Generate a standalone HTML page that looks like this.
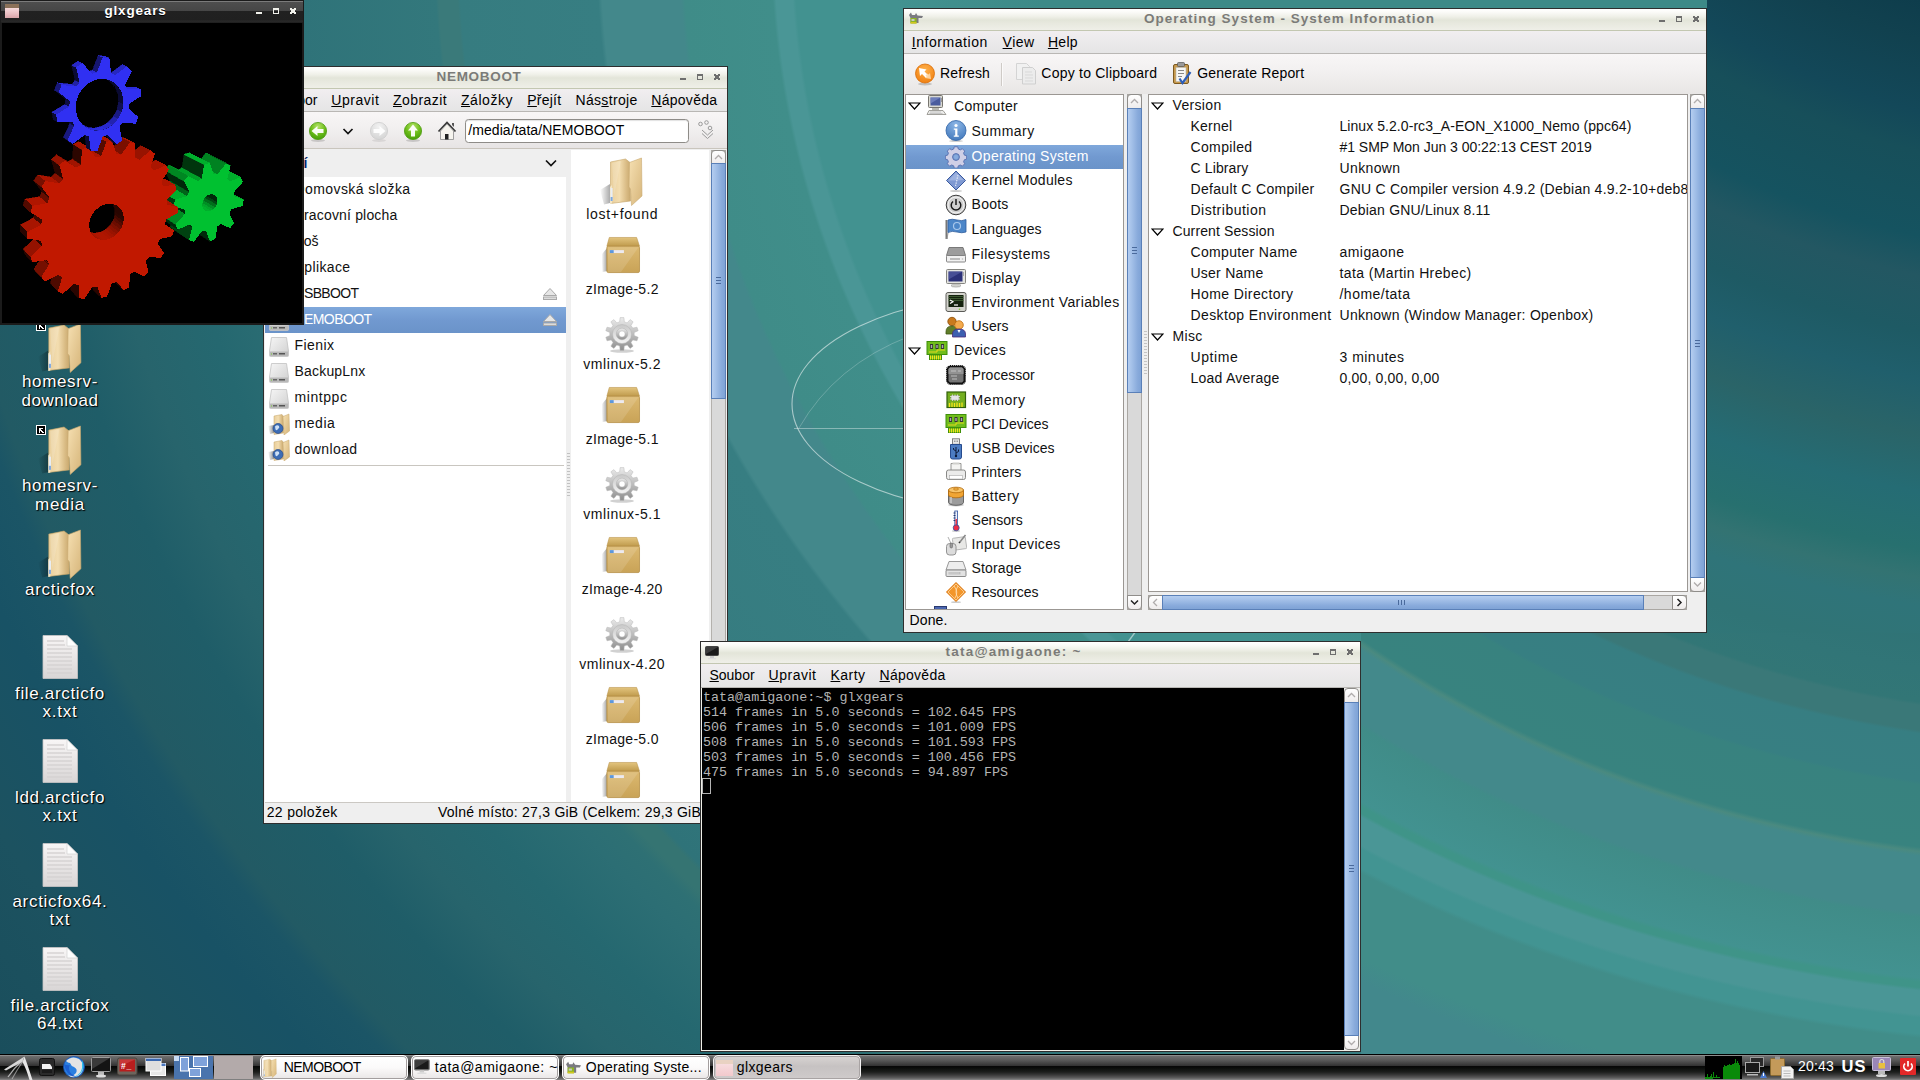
<!DOCTYPE html><html><head><meta charset="utf-8"><title>desktop</title><style>
html,body{margin:0;padding:0}
body{width:1920px;height:1080px;overflow:hidden;position:relative;font-family:"Liberation Sans",sans-serif;
background:#2f7278}
div,span,svg{position:absolute;box-sizing:border-box}
.t{white-space:nowrap;display:block}
u{text-decoration:underline;text-underline-offset:1px}
.tb{background:linear-gradient(#ffffff 0,#fbfbf8 14%,#eff0e8 36%,#e3e5d9 52%,#e8e9df 70%,#efefe8 100%);border-bottom:1px solid #c3c7b1}
.mb{background:linear-gradient(#f1eef0,#e5e5e5);border-bottom:1px solid #b9b7b4}
.tl{background:linear-gradient(#f8f6f6,#f1efef 50%,#e7e4e4);border-bottom:1px solid #c9c5bd}
.sel{background:linear-gradient(#7fa8db,#7199d0 50%,#6a93c9)}
.thv{background:linear-gradient(90deg,#b4cdf0 0,#a3c0e8 30%,#88aadb 75%,#7fa3d6 100%);border:1px solid #5a80b8}
.thh{background:linear-gradient(#b4cdf0 0,#a3c0e8 30%,#88aadb 75%,#7fa3d6 100%);border:1px solid #5a80b8}
.tr{background:#d9d9d9;border:1px solid #aaa7a3}
.sb{background:linear-gradient(#ffffff,#efecec);border:1px solid #8f8d8a}
</style></head><body>
<svg width="0" height="0" style="left:0;top:0"><defs>
<linearGradient id="gF1" x1="0" y1="0" x2="1" y2="0"><stop offset="0" stop-color="#e9cf9c"/><stop offset=".45" stop-color="#f3ddb0"/><stop offset=".8" stop-color="#d9bb84"/><stop offset="1" stop-color="#c9a96f"/></linearGradient>
<linearGradient id="gF2" x1="0" y1="0" x2="1" y2="1"><stop offset="0" stop-color="#f6e0b2"/><stop offset="1" stop-color="#d6b57a"/></linearGradient>
<linearGradient id="gSh" x1="1" y1="0" x2="0" y2="0"><stop offset="0" stop-color="#000" stop-opacity=".55"/><stop offset="1" stop-color="#000" stop-opacity="0"/></linearGradient>
<linearGradient id="gDoc" x1="0" y1="0" x2="0" y2="1"><stop offset="0" stop-color="#f8f6f6"/><stop offset="1" stop-color="#d9d6d6"/></linearGradient>
<linearGradient id="gBox" x1="0" y1="0" x2="0" y2="1"><stop offset="0" stop-color="#dcb970"/><stop offset="1" stop-color="#c9a357"/></linearGradient>
<linearGradient id="gLid" x1="0" y1="0" x2="0" y2="1"><stop offset="0" stop-color="#e3c47e"/><stop offset="1" stop-color="#bf9a4c"/></linearGradient>
<linearGradient id="gGear" x1="0" y1="0" x2="0" y2="1"><stop offset="0" stop-color="#ececec"/><stop offset="1" stop-color="#8e8e8e"/></linearGradient>
<linearGradient id="gGear2" x1="0" y1="0" x2="0" y2="1"><stop offset="0" stop-color="#c8c8c8"/><stop offset="1" stop-color="#f4f4f4"/></linearGradient>
<linearGradient id="gDrv" x1="0" y1="0" x2="1" y2="1"><stop offset="0" stop-color="#f6f6f6"/><stop offset="1" stop-color="#cfcfcf"/></linearGradient>
<radialGradient id="gGrn" cx=".5" cy=".25" r=".8"><stop offset="0" stop-color="#b5e36a"/><stop offset=".5" stop-color="#6fbf1c"/><stop offset="1" stop-color="#3f9a05"/></radialGradient>
<radialGradient id="gGry" cx=".5" cy=".25" r=".8"><stop offset="0" stop-color="#f2f2f2"/><stop offset="1" stop-color="#d2d2d2"/></radialGradient>
<radialGradient id="gOrg" cx=".5" cy=".3" r=".8"><stop offset="0" stop-color="#ffb04a"/><stop offset="1" stop-color="#ee7a0a"/></radialGradient>
<radialGradient id="gBlu" cx=".5" cy=".2" r=".9"><stop offset="0" stop-color="#8db6e6"/><stop offset="1" stop-color="#3b73b8"/></radialGradient>
<symbol id="folder" viewBox="0 0 44 50">
<path d="M1,34L11,28L11,47L5,48.500Z" fill="url(#gSh)" opacity=".6"/>
<path d="M11.500,6L26.500,3L31,6.500L31.500,45L11.500,47.500Z" fill="url(#gF1)" stroke="#c5a468" stroke-width=".6"/><path d="M13,7L22,5L15,40Z" fill="#fff" opacity=".14"/>
<path d="M11,31L13,29L13,47.600L11,48Z" fill="#f4e6c6"/>
<rect x="11.600" y="32" width="2" height="13" fill="#e9eef6"/><rect x="11.600" y="41" width="2" height="4" fill="#7da7dd"/>
<path d="M30.500,6.500L42.500,2L43,40L32.500,49.500L31.500,33L30,31Z" fill="url(#gF2)" stroke="#c9aa70" stroke-width=".6"/>
</symbol>
<symbol id="doc" viewBox="0 0 36 44">
<path d="M1,0.500H25L35.500,11V43.500H1Z" fill="url(#gDoc)" stroke="#c9c6c6" stroke-width=".8"/>
<path d="M25,0.500V11H35.500Z" fill="#fdfdfd" stroke="#cfcccc" stroke-width=".6"/>
<path d="M5,6h17M5,10h18M5,14h25M5,18h25M5,22h25M5,26h25M5,30h25M5,34h25M5,38h25" stroke="#d5d2d2" stroke-width="2" opacity=".7"/>
</symbol>
<symbol id="pkg" viewBox="0 0 40 40">
<path d="M0,19L6,12V36L1,37Z" fill="url(#gSh)" opacity=".7"/>
<path d="M8,1.500H36L39,10.500H5.500Z" fill="url(#gLid)" stroke="#b8934a" stroke-width=".6"/>
<rect x="5.500" y="10.500" width="33.500" height="27" rx="1.500" fill="url(#gBox)" stroke="#b48e44" stroke-width=".8"/>
<path d="M6.500,11.500H38L20,37H6.500Z" fill="#fff" opacity=".13"/>
<rect x="8.500" y="14.500" width="14.500" height="3" fill="#eceaf0"/><rect x="8.500" y="14.500" width="4" height="3" fill="#5b97de"/>
</symbol>
<symbol id="cog" viewBox="-18 -18 36 38">
<ellipse cx="0" cy="17" rx="12" ry="1.800" fill="#000" opacity=".18"/>
<path id="cogp" fill="url(#gGear)" stroke="#b9b9b9" stroke-width=".5" d="M-2.3,-12.1L-1.9,-16.4L1.9,-16.4L2.3,-12.1L5.2,-11.1L8.1,-14.4L11.1,-12.2L9.0,-8.4L10.8,-5.9L15.0,-6.8L16.2,-3.3L12.2,-1.5L12.2,1.5L16.2,3.3L15.0,6.8L10.8,5.9L9.0,8.4L11.1,12.2L8.1,14.4L5.2,11.1L2.3,12.1L1.9,16.4L-1.9,16.4L-2.3,12.1L-5.2,11.1L-8.1,14.4L-11.1,12.2L-9.0,8.4L-10.8,5.9L-15.0,6.8L-16.2,3.3L-12.2,1.5L-12.2,-1.5L-16.2,-3.3L-15.0,-6.8L-10.8,-5.9L-9.0,-8.4L-11.1,-12.2L-8.1,-14.4L-5.2,-11.1Z"/>
<circle r="9.500" fill="url(#gGear2)" stroke="#b4b4b4" stroke-width=".5"/><circle r="5.800" fill="url(#gGear)" stroke="#aaa" stroke-width=".4"/><circle r="3" fill="#fff" stroke="#bbb" stroke-width=".4"/>
</symbol>
<symbol id="drv" viewBox="0 0 22 22">
<path d="M3.500,1.500H18.500L20.500,15V19.500Q20.500,20.500 19.500,20.500H2.500Q1.500,20.500 1.500,19.500V15Z" fill="url(#gDrv)" stroke="#c2c2c2" stroke-width=".8"/>
<rect x="2" y="15.500" width="18" height="4.500" fill="#b9b9b9"/>
<rect x="5" y="17" width="4" height="1.500" fill="#666"/><rect x="11" y="17" width="6" height="1.500" fill="#555"/><rect x="3" y="17.500" width="1" height="1" fill="#7c3"/>
</symbol>
<symbol id="netf" viewBox="0 0 22 22">
<path d="M0,13L6,12V20L2,21Z" fill="url(#gSh)" opacity=".8"/>
<path d="M6,3L14,1.500L15.500,3.500V20L6,21.500Z" fill="url(#gF1)" stroke="#c5a468" stroke-width=".5"/>
<path d="M15,3.500L21,1L21.500,18L16,22Z" fill="url(#gF2)" stroke="#c9aa70" stroke-width=".5"/>
<circle cx="10" cy="15.500" r="5" fill="#3d6db5" stroke="#24488a" stroke-width=".7"/><path d="M7,13.500q2,-2 4,-.5q1,2 -1,3q-1,2 -2.500,.5z" fill="#cfe0f5"/>
</symbol>
<symbol id="eject" viewBox="0 0 16 14">
<path d="M8,1.500L14.500,8.500H1.500Z" fill="#e6e6e6" stroke="#a9a9a9" stroke-width="1"/><rect x="1.500" y="10" width="13" height="2.500" fill="#dcdcdc" stroke="#a9a9a9" stroke-width="1"/>
</symbol>
</defs></svg>
<div style="left:0px;top:0px;width:1920px;height:1080px;background:radial-gradient(ellipse 1317px 1068px at 2094px -56px,#3d8a88 80.00%,#429290 91.00%,#429290 98.70%,#4a9696 98.95%,#4a9696 100.20%,#408e8a 100.45%,#3f8c88 107.10%,#43888b 107.40%,#43888b 113.40%,#377e82 113.70%,#367c80 124.15%,#3a7a7a 124.35%,#3a7a7a 125.80%,#33787c 126.00%,#2f7379 136.50%,#357472 136.90%,#357472 138.20%,#2e7074 139.20%,#2c6e74 141.60%,#256870 147.20%,#27646c 153.00%,#1f5d68 157.70%,#225a64 164.60%,#1b5566 166.20%,#185265 170.80%,#1c5260 179.30%,#1a4e5c 190.00%)"></div>
<div style="left:1707px;top:0px;width:213px;height:633px;background:radial-gradient(circle 1400px at 403px -650px,#0d3a49 42.86%,#0e3d4c 48.36%,#11414f 51.14%,#134859 56.07%,#174f5a 58.86%,#155360 64.71%,#235762 67.50%,#1e5a64 71.43%,#205f6c 74.71%,#2a6468 78.64%,#256c74 82.64%,#27706f 86.71%,#337372 88.71%,#2f7479 90.71%,#307476 94.00%,#32797a 100.00%)"></div>
<div style="left:1361px;top:633px;width:559px;height:421px;background:radial-gradient(ellipse 1317px 1068px at 733px -689px,#2d7074 60.00%,#317577 69.20%,#327676 72.20%,#3a7878 72.50%,#3a7878 74.80%,#377e82 75.10%,#377f82 79.50%,#38827f 79.80%,#38837f 85.60%,#4a8a80 86.00%,#43898b 86.40%,#43898b 91.70%,#408c88 92.10%,#429290 97.70%,#3f9488 98.10%,#3f9488 98.60%,#4a9696 98.90%,#4a9696 101.10%,#429492 101.40%,#429492 102.90%,#418d89 103.30%,#418d89 110.00%,#42888c 112.00%,#42888c 125.00%)"></div>
<svg width="1920" height="1080" viewBox="0 0 1920 1080" style="left:0;top:0" fill="none">
<ellipse cx="1022" cy="404" rx="230" ry="110" stroke="#fff" stroke-opacity=".55" stroke-width="1.100"/>
<path d="M794,428.500H910" stroke="#fff" stroke-opacity=".38" stroke-width="1"/>
<path d="M799,428Q835,365 910,336" stroke="#fff" stroke-opacity=".22" stroke-width="1"/>
<path d="M1136,631L1128,642" stroke="#fff" stroke-opacity=".5" stroke-width="1.300"/>
</svg>
<svg width="45" height="51" style="left:36.5px;top:322px;"><use href="#folder" width="45" height="51"/></svg>
<svg width="10" height="10" viewBox="0 0 10 10" style="left:36px;top:321px" shape-rendering="crispEdges"><rect width="10" height="10" fill="#fff"/><rect x="1" y="1" width="8" height="8" fill="#000"/><path d="M3,3h4v1h-2v1h1v1h1v1h1v1h-2v-1h-1v-1h-1v2h-1z" fill="#fff"/></svg>
<span class="t" style="left:22.0px;top:372.9px;font-size:17px;line-height:17px;letter-spacing:0.64px;color:#fff;text-shadow:1px 1px 1px #000,0 0 2px rgba(0,0,0,.55);">homesrv-</span>
<span class="t" style="left:21.5px;top:391.5px;font-size:17px;line-height:17px;letter-spacing:0.53px;color:#fff;text-shadow:1px 1px 1px #000,0 0 2px rgba(0,0,0,.55);">download</span>
<svg width="45" height="51" style="left:36.5px;top:424px;"><use href="#folder" width="45" height="51"/></svg>
<svg width="10" height="10" viewBox="0 0 10 10" style="left:36px;top:425px" shape-rendering="crispEdges"><rect width="10" height="10" fill="#fff"/><rect x="1" y="1" width="8" height="8" fill="#000"/><path d="M3,3h4v1h-2v1h1v1h1v1h1v1h-2v-1h-1v-1h-1v2h-1z" fill="#fff"/></svg>
<span class="t" style="left:22.0px;top:476.9px;font-size:17px;line-height:17px;letter-spacing:0.64px;color:#fff;text-shadow:1px 1px 1px #000,0 0 2px rgba(0,0,0,.55);">homesrv-</span>
<span class="t" style="left:35.0px;top:495.5px;font-size:17px;line-height:17px;letter-spacing:0.74px;color:#fff;text-shadow:1px 1px 1px #000,0 0 2px rgba(0,0,0,.55);">media</span>
<svg width="45" height="51" style="left:36.5px;top:528px;"><use href="#folder" width="45" height="51"/></svg>
<span class="t" style="left:25.0px;top:580.9px;font-size:17px;line-height:17px;letter-spacing:0.75px;color:#fff;text-shadow:1px 1px 1px #000,0 0 2px rgba(0,0,0,.55);">arcticfox</span>
<svg width="36" height="44" style="left:42px;top:634.7px;"><use href="#doc" width="36" height="44"/></svg>
<span class="t" style="left:15.0px;top:684.6px;font-size:17px;line-height:17px;letter-spacing:0.67px;color:#fff;text-shadow:1px 1px 1px #000,0 0 2px rgba(0,0,0,.55);">file.arcticfo</span>
<span class="t" style="left:42.5px;top:703.2px;font-size:17px;line-height:17px;letter-spacing:0.77px;color:#fff;text-shadow:1px 1px 1px #000,0 0 2px rgba(0,0,0,.55);">x.txt</span>
<svg width="36" height="44" style="left:42px;top:738.7px;"><use href="#doc" width="36" height="44"/></svg>
<span class="t" style="left:15.0px;top:788.6px;font-size:17px;line-height:17px;letter-spacing:0.65px;color:#fff;text-shadow:1px 1px 1px #000,0 0 2px rgba(0,0,0,.55);">ldd.arcticfo</span>
<span class="t" style="left:42.5px;top:807.2px;font-size:17px;line-height:17px;letter-spacing:0.77px;color:#fff;text-shadow:1px 1px 1px #000,0 0 2px rgba(0,0,0,.55);">x.txt</span>
<svg width="36" height="44" style="left:42px;top:842.7px;"><use href="#doc" width="36" height="44"/></svg>
<span class="t" style="left:12.5px;top:892.6px;font-size:17px;line-height:17px;letter-spacing:0.67px;color:#fff;text-shadow:1px 1px 1px #000,0 0 2px rgba(0,0,0,.55);">arcticfox64.</span>
<span class="t" style="left:49.5px;top:911.2px;font-size:17px;line-height:17px;letter-spacing:1.02px;color:#fff;text-shadow:1px 1px 1px #000,0 0 2px rgba(0,0,0,.55);">txt</span>
<svg width="36" height="44" style="left:42px;top:946.7px;"><use href="#doc" width="36" height="44"/></svg>
<span class="t" style="left:10.5px;top:996.6px;font-size:17px;line-height:17px;letter-spacing:0.66px;color:#fff;text-shadow:1px 1px 1px #000,0 0 2px rgba(0,0,0,.55);">file.arcticfox</span>
<span class="t" style="left:37.0px;top:1015.2px;font-size:17px;line-height:17px;letter-spacing:0.74px;color:#fff;text-shadow:1px 1px 1px #000,0 0 2px rgba(0,0,0,.55);">64.txt</span>
<div style="left:263px;top:66px;width:465px;height:758px;background:#efefef;border:1px solid #2e2e2e"></div>
<div class="tb" style="left:264px;top:67px;width:463px;height:22px;"></div>
<span class="t" style="left:436.5px;top:69.6px;font-size:13.5px;line-height:13.5px;letter-spacing:0.69px;color:#7b7b78;font-weight:bold;">NEMOBOOT</span>
<svg width="46" height="8" viewBox="0 0 46 8" style="left:680px;top:73px" shape-rendering="crispEdges"><rect x="0" y="5" width="6" height="2" fill="#6e6e6e"/><path d="M17,1h6v6h-6zM18,3v3h4v-3z" fill="#6e6e6e" fill-rule="evenodd"/><path d="M34,1h2v1h2v-1h2v2h-1v2h1v2h-2v-1h-2v1h-2v-2h1v-2h-1z" fill="#6e6e6e"/></svg>
<div class="mb" style="left:264px;top:89px;width:463px;height:23px;"></div>
<span class="t" style="left:272.3px;top:92.6px;font-size:14px;line-height:14px;letter-spacing:-0.02px;color:#000;"><u>S</u>oubor</span>
<span class="t" style="left:331.3px;top:92.6px;font-size:14px;line-height:14px;letter-spacing:0.52px;color:#000;"><u>U</u>pravit</span>
<span class="t" style="left:393.0px;top:92.6px;font-size:14px;line-height:14px;letter-spacing:0.43px;color:#000;"><u>Z</u>obrazit</span>
<span class="t" style="left:461.0px;top:92.6px;font-size:14px;line-height:14px;letter-spacing:0.54px;color:#000;"><u>Z</u>áložky</span>
<span class="t" style="left:527.3px;top:92.6px;font-size:14px;line-height:14px;letter-spacing:0.22px;color:#000;"><u>P</u>řejít</span>
<span class="t" style="left:575.5px;top:92.6px;font-size:14px;line-height:14px;letter-spacing:0.32px;color:#000;">Nás<u>s</u>troje</span>
<span class="t" style="left:651.3px;top:92.6px;font-size:14px;line-height:14px;letter-spacing:0.27px;color:#000;"><u>N</u>ápověda</span>
<div class="tl" style="left:264px;top:112px;width:463px;height:37px;"></div>
<svg width="463" height="37" viewBox="264 112 463 37" style="left:264px;top:112px">
<ellipse cx="318" cy="140.500" rx="7" ry="1.500" fill="#000" opacity=".15"/><circle cx="318" cy="131" r="8.600" fill="url(#gGrn)" stroke="#4f9c10" stroke-width=".8"/>
<path d="M311.500,131l6,-5v3h6v4h-6v3z" fill="#fff" opacity=".95"/>
<path d="M343.500,129l4.500,4.500l4.500,-4.500" fill="none" stroke="#111" stroke-width="1.700"/>
<ellipse cx="379" cy="140.500" rx="7" ry="1.500" fill="#000" opacity=".08"/><circle cx="379" cy="131" r="8.600" fill="url(#gGry)" stroke="#cdcdcd" stroke-width=".8"/>
<path d="M385.500,131l-6,-5v3h-6v4h6v3z" fill="#fff" opacity=".9"/>
<ellipse cx="413" cy="140.500" rx="7" ry="1.500" fill="#000" opacity=".15"/><circle cx="413" cy="131" r="8.600" fill="url(#gGrn)" stroke="#4f9c10" stroke-width=".8"/>
<path d="M413,124.500l5,6h-3v6h-4v-6h-3z" fill="#fff" opacity=".95"/>
<path d="M438.500,131.500l8.500,-9l8.500,9" fill="none" stroke="#3a3a3a" stroke-width="1.800"/><path d="M452,123h2v4l-2,-2z" fill="#555"/>
<path d="M440.500,131l6.500,-7l6.500,7v8.500h-13z" fill="#f6f4ee" stroke="#8a8a8a" stroke-width=".8"/><rect x="445" y="134" width="3.500" height="5.500" fill="#222"/>
<g fill="none" stroke="#9a9a9a" stroke-width="1"><circle cx="700.500" cy="124" r="1.800"/><circle cx="706.500" cy="122.500" r="1.800"/><circle cx="710" cy="128" r="1.800"/><path d="M702,133.500l5.500,5l5.500,-5M702,130l5.500,5l5.500,-5"/></g>
</svg>
<div style="left:465px;top:119px;width:224px;height:24px;background:#fff;border:1px solid #8e8c88;border-radius:3.500px;box-shadow:inset 0 1px 1px rgba(0,0,0,.12)"></div>
<span class="t" style="left:468.3px;top:123.1px;font-size:14px;line-height:14px;letter-spacing:0.06px;color:#000;">/media/tata/NEMOBOOT</span>
<div style="left:265px;top:149px;width:301px;height:28px;background:#efefef"></div>
<span class="t" style="left:256.0px;top:155.6px;font-size:14px;line-height:14px;letter-spacing:0.63px;color:#0a246a;font-weight:bold;">Osobní</span>
<svg width="14" height="10" viewBox="0 0 14 10" style="left:544px;top:158px"><path d="M2,2.500l5,5l5,-5" fill="none" stroke="#111" stroke-width="1.700"/></svg>
<div style="left:265px;top:177px;width:301px;height:626px;background:#fff"></div>
<span class="t" style="left:294.5px;top:182.1px;font-size:14px;line-height:14px;letter-spacing:0.42px;color:#111;">Domovská složka</span>
<span class="t" style="left:294.5px;top:208.1px;font-size:14px;line-height:14px;letter-spacing:0.17px;color:#111;">Pracovní plocha</span>
<span class="t" style="left:294.5px;top:234.1px;font-size:14px;line-height:14px;letter-spacing:-0.04px;color:#111;">Koš</span>
<span class="t" style="left:294.5px;top:260.1px;font-size:14px;line-height:14px;letter-spacing:0.39px;color:#111;">Aplikace</span>
<span class="t" style="left:294.5px;top:286.1px;font-size:14px;line-height:14px;letter-spacing:-0.64px;color:#111;">USBBOOT</span>
<svg width="16" height="14" style="left:542px;top:287px;"><use href="#eject" width="16" height="14"/></svg>
<svg width="22" height="22" style="left:268px;top:283.5px;"><use href="#drv" width="22" height="22"/></svg>
<div class="sel" style="left:265px;top:307px;width:301px;height:26px;"></div>
<span class="t" style="left:294.5px;top:312.1px;font-size:14px;line-height:14px;letter-spacing:-0.58px;color:#fff;">NEMOBOOT</span>
<svg width="16" height="14" style="left:542px;top:313px;"><use href="#eject" width="16" height="14"/></svg>
<svg width="22" height="22" style="left:268px;top:309.5px;"><use href="#drv" width="22" height="22"/></svg>
<span class="t" style="left:294.5px;top:338.1px;font-size:14px;line-height:14px;letter-spacing:0.44px;color:#111;">Fienix</span>
<svg width="22" height="22" style="left:268px;top:335.5px;"><use href="#drv" width="22" height="22"/></svg>
<span class="t" style="left:294.5px;top:364.1px;font-size:14px;line-height:14px;letter-spacing:0.19px;color:#111;">BackupLnx</span>
<svg width="22" height="22" style="left:268px;top:361.5px;"><use href="#drv" width="22" height="22"/></svg>
<span class="t" style="left:294.5px;top:390.1px;font-size:14px;line-height:14px;letter-spacing:0.57px;color:#111;">mintppc</span>
<svg width="22" height="22" style="left:268px;top:387.5px;"><use href="#drv" width="22" height="22"/></svg>
<span class="t" style="left:294.5px;top:416.1px;font-size:14px;line-height:14px;letter-spacing:0.57px;color:#111;">media</span>
<svg width="22" height="22" style="left:267.5px;top:413px;"><use href="#netf" width="22" height="22"/></svg>
<span class="t" style="left:294.5px;top:442.1px;font-size:14px;line-height:14px;letter-spacing:0.38px;color:#111;">download</span>
<svg width="22" height="22" style="left:267.5px;top:439px;"><use href="#netf" width="22" height="22"/></svg>
<div style="left:268px;top:464.5px;width:296px;height:1.5px;background:#c9c6c0"></div>
<div style="left:567px;top:452px;width:3px;height:46px;background:repeating-linear-gradient(#efefef 0,#efefef 1.500px,#bdbdbd 1.500px,#bdbdbd 2.500px,#efefef 2.500px,#efefef 3px);opacity:.9"></div>
<div style="left:571px;top:150px;width:138px;height:653px;background:#fff"></div>
<svg width="44" height="50" style="left:599px;top:156.1px;"><use href="#folder" width="44" height="50"/></svg>
<span class="t" style="left:586.2px;top:206.7px;font-size:14px;line-height:14px;letter-spacing:0.70px;color:#111;">lost+found</span>
<svg width="40" height="39" style="left:600.5px;top:236.1px;"><use href="#pkg" width="40" height="39"/></svg>
<span class="t" style="left:585.7px;top:281.7px;font-size:14px;line-height:14px;letter-spacing:0.30px;color:#111;">zImage-5.2</span>
<svg width="36" height="38" style="left:604px;top:316.1px;"><use href="#cog" width="36" height="38"/></svg>
<span class="t" style="left:583.2px;top:356.7px;font-size:14px;line-height:14px;letter-spacing:0.58px;color:#111;">vmlinux-5.2</span>
<svg width="40" height="39" style="left:600.5px;top:386.1px;"><use href="#pkg" width="40" height="39"/></svg>
<span class="t" style="left:585.7px;top:431.7px;font-size:14px;line-height:14px;letter-spacing:0.30px;color:#111;">zImage-5.1</span>
<svg width="36" height="38" style="left:604px;top:466.1px;"><use href="#cog" width="36" height="38"/></svg>
<span class="t" style="left:583.2px;top:506.7px;font-size:14px;line-height:14px;letter-spacing:0.58px;color:#111;">vmlinux-5.1</span>
<svg width="40" height="39" style="left:600.5px;top:536.1px;"><use href="#pkg" width="40" height="39"/></svg>
<span class="t" style="left:581.7px;top:581.7px;font-size:14px;line-height:14px;letter-spacing:0.29px;color:#111;">zImage-4.20</span>
<svg width="36" height="38" style="left:604px;top:616.1px;"><use href="#cog" width="36" height="38"/></svg>
<span class="t" style="left:579.2px;top:656.7px;font-size:14px;line-height:14px;letter-spacing:0.55px;color:#111;">vmlinux-4.20</span>
<svg width="40" height="39" style="left:600.5px;top:686.1px;"><use href="#pkg" width="40" height="39"/></svg>
<span class="t" style="left:585.7px;top:731.7px;font-size:14px;line-height:14px;letter-spacing:0.30px;color:#111;">zImage-5.0</span>
<svg width="40" height="39" style="left:600.5px;top:761.1px;"><use href="#pkg" width="40" height="39"/></svg>
<div style="left:571px;top:800px;width:138px;height:3px;background:#fff"></div>
<div class="tr" style="left:711px;top:150px;width:15px;height:653px;border-left-color:#b4b1ad"></div>
<div class="sb" style="left:711px;top:150px;width:15px;height:14px;border-radius:4px 4px 0 0"></div>
<div class="thv" style="left:711px;top:163px;width:15px;height:236px;"></div>
<svg width="15" height="260" viewBox="0 0 15 260" style="left:711px;top:150px" fill="none"><path d="M4,9l3.500,-3.500l3.500,3.500" stroke="#b0acac" stroke-width="1.300"/><path d="M5,127.500h5M5,130.500h5M5,133.500h5" stroke="#4a6a9c" stroke-width="1"/></svg>
<div style="left:265px;top:802px;width:462px;height:1px;background:#cbc8c3"></div>
<span class="t" style="left:266.7px;top:805.1px;font-size:14px;line-height:14px;letter-spacing:0.33px;color:#000;">22 položek</span>
<span class="t" style="left:438.0px;top:805.1px;font-size:14px;line-height:14px;letter-spacing:0.24px;color:#000;">Volné místo: 27,3 GiB (Celkem: 29,3 GiB)</span>
<div style="left:903px;top:8px;width:804px;height:625px;background:#efefef;border:1px solid #2e2e2e"></div>
<div class="tb" style="left:904px;top:9px;width:802px;height:22px;"></div>
<svg width="16" height="13" viewBox="0 0 16 13" style="left:907.500px;top:12px"><path d="M1,3l2,-2.500l1,2.500h3l1,-2l1.500,2.500l5.500,.5l-1,2h-3.500v5h-8v-5z" fill="#7a7a80"/><rect x="2.500" y="6" width="6" height="5.500" fill="#8db522"/><rect x="3.500" y="7" width="3" height="2" fill="#c8c8c8"/><rect x="2.500" y="10" width="6" height="1.500" fill="#d6c81e"/></svg>
<span class="t" style="left:1144.0px;top:11.6px;font-size:13.5px;line-height:13.5px;letter-spacing:1.01px;color:#7b7b78;font-weight:bold;">Operating System - System Information</span>
<svg width="46" height="8" viewBox="0 0 46 8" style="left:1659px;top:15px" shape-rendering="crispEdges"><rect x="0" y="5" width="6" height="2" fill="#6e6e6e"/><path d="M17,1h6v6h-6zM18,3v3h4v-3z" fill="#6e6e6e" fill-rule="evenodd"/><path d="M34,1h2v1h2v-1h2v2h-1v2h1v2h-2v-1h-2v1h-2v-2h1v-2h-1z" fill="#6e6e6e"/></svg>
<div class="mb" style="left:904px;top:31px;width:802px;height:23px;"></div>
<span class="t" style="left:911.8px;top:35.1px;font-size:14px;line-height:14px;letter-spacing:0.54px;color:#000;"><u>I</u>nformation</span>
<span class="t" style="left:1002.6px;top:35.1px;font-size:14px;line-height:14px;letter-spacing:0.48px;color:#000;"><u>V</u>iew</span>
<span class="t" style="left:1047.9px;top:35.1px;font-size:14px;line-height:14px;letter-spacing:0.30px;color:#000;"><u>H</u>elp</span>
<div style="left:904px;top:54px;width:802px;height:40px;background:linear-gradient(#f8f6f6,#f2f0f0 45%,#e8e6e5)"></div>
<svg width="300" height="40" viewBox="904 54 300 40" style="left:904px;top:54px">
<ellipse cx="925" cy="84" rx="7" ry="1.500" fill="#000" opacity=".18"/><circle cx="925" cy="73.500" r="9.500" fill="url(#gOrg)" stroke="#d96c06" stroke-width=".8"/>
<path d="M919,68l7.500,1.500l-2,2l4,4l-2.500,2.500l-4,-4l-2,2z" fill="#fff"/><path d="M931,79l-6,-1l1.500,-1.500l-1,-1l2,-2l1,1l1.500,-1.500z" fill="#ffd9a8" opacity=".9"/>
<rect x="1001" y="63" width="1" height="23" fill="#cfcbc7"/><rect x="1002" y="63" width="1" height="23" fill="#fbfafa"/>
<path d="M1016.500,63.500h10l3,3v13h-13z" fill="#f1f1f1" stroke="#d4d4d4"/><path d="M1022.500,67.500h10l3,3v13.500h-13z" fill="#ececec" stroke="#cfcfcf"/><path d="M1025,72h7M1025,75h8M1025,78h8M1025,81h8" stroke="#d9d9d9" stroke-width="1"/>
<rect x="1173.500" y="64.500" width="15" height="19" rx="1.500" fill="#c89a4e" stroke="#7d5a20"/><rect x="1176" y="67.500" width="10" height="14" fill="#f7f7f5" stroke="#b8b8b0" stroke-width=".6"/><rect x="1177.500" y="62.500" width="7" height="4" rx="1" fill="#9a9a9a" stroke="#555" stroke-width=".7"/>
<path d="M1178,70.500h6M1178,73.500h6M1178,76.500h4" stroke="#888" stroke-width="1"/><path d="M1179.500,78.500l3,4.500l8,-11" fill="none" stroke="#2f5fb8" stroke-width="2.200"/>
</svg>
<span class="t" style="left:940.0px;top:66.1px;font-size:14px;line-height:14px;letter-spacing:0.14px;color:#000;">Refresh</span>
<span class="t" style="left:1041.3px;top:66.1px;font-size:14px;line-height:14px;letter-spacing:0.23px;color:#000;">Copy to Clipboard</span>
<span class="t" style="left:1197.3px;top:66.1px;font-size:14px;line-height:14px;letter-spacing:0.18px;color:#000;">Generate Report</span>
<div style="left:905px;top:94px;width:219px;height:516px;background:#fff;border:1px solid #9b9793;overflow:hidden"></div>
<div class="sel" style="left:906px;top:145px;width:217px;height:24px;"></div>
<svg width="13" height="8" viewBox="0 0 13 8" style="left:907.5px;top:102px"><path d="M1,1H12L6.500,7Z" fill="#fff" stroke="#000" stroke-width="1.200" stroke-linejoin="miter"/></svg>
<svg width="22" height="22" viewBox="0 0 22 22" style="left:926px;top:95px"><rect x="2.500" y=".5" width="14" height="12" rx="1" fill="#d9d9d2" stroke="#77756f"/><rect x="4.500" y="2.500" width="10" height="8" fill="#4a5c9e"/><path d="M4.500,2.500h10l-10,6z" fill="#7c8cc8" opacity=".7"/><rect x="15" y="3" width="1" height="4" fill="#999"/><path d="M3,15.500h14l3,4h-19z" fill="#ececea" stroke="#8d8b85" stroke-width=".8"/><path d="M4,17h11M3.500,18.500h13" stroke="#bbb" stroke-width=".8"/><rect x="6" y="13" width="7" height="2" fill="#b8b8b2"/></svg>
<span class="t" style="left:954.0px;top:98.8px;font-size:14px;line-height:14px;letter-spacing:0.32px;color:#111;">Computer</span>
<svg width="22" height="22" viewBox="0 0 22 22" style="left:945px;top:120px"><ellipse cx="11" cy="21" rx="7" ry="1.200" fill="#000" opacity=".18"/><circle cx="11" cy="10.500" r="10" fill="url(#gBlu)" stroke="#2e62a6" stroke-width=".8"/><path d="M8.800,8.500h3.600v7h1.400v1.300h-5v-1.300h1.400v-5.700h-1.400z" fill="#fff"/><circle cx="11" cy="5.500" r="1.600" fill="#fff"/></svg>
<span class="t" style="left:971.6px;top:123.8px;font-size:14px;line-height:14px;letter-spacing:0.44px;color:#111;">Summary</span>
<svg width="22" height="22" viewBox="0 0 22 22" style="left:945px;top:145.5px"><path transform="translate(11,11) scale(.62)" d="M-2.800,-16.500h5.600l.9,3.600l3.300,1.400l3.200,-1.900l3.900,3.900l-1.900,3.200l1.400,3.300l3.600,.9v5.600l-3.600,.9l-1.400,3.300l1.900,3.200l-3.900,3.900l-3.200,-1.900l-3.300,1.400l-.9,3.600h-5.600l-.9,-3.600l-3.300,-1.400l-3.200,1.900l-3.900,-3.900l1.900,-3.200l-1.400,-3.300l-3.600,-.9v-5.600l3.600,-.9l1.400,-3.300l-1.900,-3.200l3.900,-3.900l3.200,1.900l3.300,-1.400z" fill="#cfcfe6" stroke="#5870b0" stroke-width="1.500"/><circle cx="11" cy="11" r="3.400" fill="#7ba1d6" stroke="#5870b0" stroke-width="1"/><circle cx="11" cy="11" r="2" fill="#86aade"/></svg>
<span class="t" style="left:971.6px;top:149.3px;font-size:14px;line-height:14px;letter-spacing:0.31px;color:#fff;">Operating System</span>
<svg width="22" height="22" viewBox="0 0 22 22" style="left:945px;top:169.5px"><ellipse cx="11" cy="21" rx="6" ry="1" fill="#000" opacity=".2"/><path d="M11,1L20.500,10.500L11,20L1.500,10.500Z" fill="#7f99d2" stroke="#3a5a9e" stroke-width="1"/><path d="M11,2.500L18.500,10L11,10.500L3.500,10.500Z" fill="#a9bce6" opacity=".7"/><path d="M13,5l-2.500,11" stroke="#dfe6f6" stroke-width="1.200" stroke-dasharray="1.500 1"/></svg>
<span class="t" style="left:971.6px;top:173.3px;font-size:14px;line-height:14px;letter-spacing:0.27px;color:#111;">Kernel Modules</span>
<svg width="22" height="22" viewBox="0 0 22 22" style="left:945px;top:193.5px"><circle cx="11" cy="11" r="9.800" fill="#d0d0d0" stroke="#3c3c3c" stroke-width="1"/><circle cx="11" cy="11" r="8" fill="none" stroke="#f2f2f2" stroke-width="1"/><path d="M8,7.500a4.800,4.800 0 1 0 6,0" fill="none" stroke="#1a1a1a" stroke-width="1.500"/><path d="M11,5v6" stroke="#1a1a1a" stroke-width="1.500"/></svg>
<span class="t" style="left:971.6px;top:197.3px;font-size:14px;line-height:14px;letter-spacing:0.24px;color:#111;">Boots</span>
<svg width="22" height="22" viewBox="0 0 22 22" style="left:945px;top:218px"><path d="M1.500,2v19" stroke="#777" stroke-width="2"/><path d="M3,2q4,-1.500 9,0t9,-.5v12.500q-4,1.500 -9,0t-9,.5z" fill="#4c86c8" stroke="#2d5c9c" stroke-width=".8"/><circle cx="12" cy="8" r="3.500" fill="none" stroke="#a9c8ec" stroke-width="1.200"/><path d="M3,15l-1,6" stroke="#999" stroke-width="1"/></svg>
<span class="t" style="left:971.6px;top:221.8px;font-size:14px;line-height:14px;letter-spacing:0.08px;color:#111;">Languages</span>
<svg width="22" height="22" viewBox="0 0 22 22" style="left:945px;top:243px"><path d="M4,4.500h14l2.500,8h-19z" fill="#9d9d9d" stroke="#6f6f6f" stroke-width=".9"/><rect x="1.500" y="12.500" width="19" height="6.500" rx="1" fill="#f1f1f1" stroke="#7a7a7a" stroke-width=".9"/><path d="M5,16h10" stroke="#999" stroke-width="1.200"/><circle cx="17.500" cy="16" r=".8" fill="#bbb"/></svg>
<span class="t" style="left:971.6px;top:246.8px;font-size:14px;line-height:14px;letter-spacing:0.46px;color:#111;">Filesystems</span>
<svg width="22" height="22" viewBox="0 0 22 22" style="left:945px;top:267px"><rect x="1.500" y="2.500" width="19" height="14" rx="1" fill="#e4e4e0" stroke="#858580"/><rect x="3.500" y="4.500" width="14" height="10" fill="#2b3078"/><path d="M3.500,4.500h14l-14,8z" fill="#5a62a8" opacity=".6"/><path d="M18.500,5v4" stroke="#aaa"/><ellipse cx="11" cy="18.500" rx="5" ry="1.600" fill="#d2d2ce" stroke="#999" stroke-width=".6"/></svg>
<span class="t" style="left:971.6px;top:270.8px;font-size:14px;line-height:14px;letter-spacing:0.44px;color:#111;">Display</span>
<svg width="22" height="22" viewBox="0 0 22 22" style="left:945px;top:291px"><rect x="1" y="1.500" width="20" height="19" rx="2" fill="#d3d3cd" stroke="#5c5c58"/><rect x="3.500" y="4" width="15" height="12" fill="#14220e"/><path d="M3.500,5.500h15M3.500,7.500h15M3.500,9.500h15" stroke="#48663a" stroke-width="1" opacity=".8"/><path d="M5,9l3,1.800l-3,1.800" fill="none" stroke="#fff" stroke-width="1.200"/><path d="M9,14h4" stroke="#fff" stroke-width="1.200"/><circle cx="14.500" cy="18.200" r=".8" fill="#7c3"/></svg>
<span class="t" style="left:971.6px;top:294.8px;font-size:14px;line-height:14px;letter-spacing:0.39px;color:#111;">Environment Variables</span>
<svg width="22" height="22" viewBox="0 0 22 22" style="left:945px;top:315.5px"><circle cx="7" cy="5.500" r="4.200" fill="#c97a1e" stroke="#8a4e0a" stroke-width=".8"/><path d="M1,16q0,-6 6,-6t6,6v2h-12z" fill="#5f7d2a" stroke="#3e5612" stroke-width=".8"/><circle cx="14" cy="9" r="4.300" fill="#f4ab4e" stroke="#c26d0c" stroke-width=".8"/><path d="M7.500,21v-3q0,-5 6.500,-5t6.500,5v3z" fill="#3c5fb0" stroke="#4a2a7a" stroke-width=".8"/><path d="M12.500,14l1.500,3l1.500,-3z" fill="#fff"/></svg>
<span class="t" style="left:971.6px;top:319.3px;font-size:14px;line-height:14px;letter-spacing:0.09px;color:#111;">Users</span>
<svg width="13" height="8" viewBox="0 0 13 8" style="left:907.5px;top:346.5px"><path d="M1,1H12L6.500,7Z" fill="#fff" stroke="#000" stroke-width="1.200" stroke-linejoin="miter"/></svg>
<svg width="22" height="22" viewBox="0 0 22 22" style="left:926px;top:339.5px"><rect x="1" y="1.500" width="20" height="13" fill="#71bd1c" stroke="#3f8f0a"/><rect x="3.500" y="15" width="12" height="4.500" fill="#71bd1c" stroke="#3f8f0a"/><path d="M4.500,15.500v4M6.500,15.500v4M8.500,15.500v4M10.500,15.500v4M12.500,15.500v4M14.500,15.500v4" stroke="#f3e21c" stroke-width="1"/><rect x="4" y="4" width="3" height="5" fill="#333"/><rect x="9.500" y="4" width="3" height="5" fill="#333"/><rect x="15" y="4" width="3" height="5" fill="#333"/><rect x="4.800" y="5" width="1.400" height="3" fill="#aaa"/><rect x="10.300" y="5" width="1.400" height="3" fill="#aaa"/><rect x="15.800" y="5" width="1.400" height="3" fill="#aaa"/><path d="M3,12h8v-2h8" fill="none" stroke="#e6d81a" stroke-width="1"/></svg>
<span class="t" style="left:954.0px;top:343.3px;font-size:14px;line-height:14px;letter-spacing:0.32px;color:#111;">Devices</span>
<svg width="22" height="22" viewBox="0 0 22 22" style="left:945px;top:364px"><path d="M4,1h14l3,3v14l-3,3h-14l-3,-3v-14z" fill="#111"/><path d="M4,1h14l3,3v14l-3,3h-14l-3,-3v-14z" fill="none" stroke="#fff" stroke-width="1.400" stroke-dasharray="1 1.050"/><path d="M5,3.500h12l1.500,1.500v12l-1.500,1.500h-12l-1.500,-1.500v-12z" fill="#757575"/><path d="M5,3.500h12l1.500,1.500v5h-15v-5z" fill="#929292"/><path d="M6,7h5M13,7h3M6,12h6M7,15h5" stroke="#cfcfcf" stroke-width="1.200" opacity=".8"/></svg>
<span class="t" style="left:971.6px;top:367.8px;font-size:14px;line-height:14px;letter-spacing:-0.00px;color:#111;">Processor</span>
<svg width="22" height="22" viewBox="0 0 22 22" style="left:945px;top:389px"><rect x="2" y="3" width="18.500" height="15.500" fill="#74ae20" stroke="#33610a" stroke-width="1.200"/><rect x="6" y="6.500" width="8" height="4.500" rx="1" fill="#e4e4e4" stroke="#888" stroke-width=".6"/><path d="M5,7.500h10M5,10h10M7.500,5.500v6.500M10,5.500v6.500M12.500,5.500v6.500" stroke="#e4e4e4" stroke-width=".8"/><path d="M4.500,14v4M7,13.500v4.500M9.500,14v4M12,13.500v4.500M14.500,14v4M17,13.500v4.500" stroke="#f6e51a" stroke-width="1.300"/></svg>
<span class="t" style="left:971.6px;top:392.8px;font-size:14px;line-height:14px;letter-spacing:0.57px;color:#111;">Memory</span>
<svg width="22" height="22" viewBox="0 0 22 22" style="left:945px;top:413px"><rect x="1" y="1.500" width="20" height="13" fill="#71bd1c" stroke="#3f8f0a"/><rect x="3.500" y="15" width="12" height="4.500" fill="#71bd1c" stroke="#3f8f0a"/><path d="M4.500,15.500v4M6.500,15.500v4M8.500,15.500v4M10.500,15.500v4M12.500,15.500v4M14.500,15.500v4" stroke="#f3e21c" stroke-width="1"/><rect x="4" y="4" width="3" height="5" fill="#333"/><rect x="9.500" y="4" width="3" height="5" fill="#333"/><rect x="15" y="4" width="3" height="5" fill="#333"/><rect x="4.800" y="5" width="1.400" height="3" fill="#aaa"/><rect x="10.300" y="5" width="1.400" height="3" fill="#aaa"/><rect x="15.800" y="5" width="1.400" height="3" fill="#aaa"/><path d="M3,12h8v-2h8" fill="none" stroke="#e6d81a" stroke-width="1"/></svg>
<span class="t" style="left:971.6px;top:416.8px;font-size:14px;line-height:14px;letter-spacing:-0.00px;color:#111;">PCI Devices</span>
<svg width="22" height="22" viewBox="0 0 22 22" style="left:945px;top:437.5px"><rect x="7.500" y=".8" width="7" height="5.500" fill="#e9e9e9" stroke="#777" stroke-width=".9"/><rect x="9" y="2.500" width="1.500" height="1.500" fill="#999"/><rect x="11.500" y="2.500" width="1.500" height="1.500" fill="#999"/><path d="M5.500,6.500h11v12.500q0,2 -2,2h-7q-2,0 -2,-2z" fill="#4c7cc2" stroke="#274b8e" stroke-width="1"/><path d="M11,9v9M11,13l-2.500,-1.500v-1.500M11,15l2.500,-1.500v-2" fill="none" stroke="#0c1a38" stroke-width="1"/><circle cx="11" cy="18" r="1.200" fill="#0c1a38"/></svg>
<span class="t" style="left:971.6px;top:441.3px;font-size:14px;line-height:14px;letter-spacing:0.05px;color:#111;">USB Devices</span>
<svg width="22" height="22" viewBox="0 0 22 22" style="left:945px;top:461px"><path d="M6,9v-6.500h10v6.500" fill="#f4f4f2" stroke="#8b8b88" stroke-width=".9"/><rect x="7.500" y="1.500" width="7" height="2" fill="#cfcfcc"/><rect x="1.500" y="9" width="19" height="9.500" rx="2" fill="#ebebea" stroke="#7d7d7a" stroke-width=".9"/><rect x="4.500" y="14.500" width="13" height="3.500" fill="#fff" stroke="#aaa" stroke-width=".6"/></svg>
<span class="t" style="left:971.6px;top:464.8px;font-size:14px;line-height:14px;letter-spacing:0.22px;color:#111;">Printers</span>
<svg width="22" height="22" viewBox="0 0 22 22" style="left:945px;top:485px"><ellipse cx="11" cy="20" rx="8" ry="1.500" fill="#000" opacity=".2"/><path d="M3.500,5v12.500a7.500,2.800 0 0 0 15,0v-12.500z" fill="#9b9b9b" stroke="#4d4d4d" stroke-width=".8"/><path d="M3.500,5v5a7.500,2.800 0 0 0 15,0v-5z" fill="#f1a534" stroke="#b26a0a" stroke-width=".8"/><ellipse cx="11" cy="5" rx="7.500" ry="2.800" fill="#f8c46a" stroke="#b26a0a" stroke-width=".8"/><ellipse cx="11" cy="4" rx="2.500" ry="1.200" fill="#f3b146" stroke="#b26a0a" stroke-width=".6"/><path d="M6,12v6" stroke="#d8d8d8" stroke-width="2" opacity=".6"/></svg>
<span class="t" style="left:971.6px;top:488.8px;font-size:14px;line-height:14px;letter-spacing:0.52px;color:#111;">Battery</span>
<svg width="22" height="22" viewBox="0 0 22 22" style="left:945px;top:509.5px"><ellipse cx="11" cy="21" rx="4" ry=".9" fill="#000" opacity=".2"/><rect x="9.800" y="1" width="2.800" height="15" fill="#eef2fa" stroke="#2d52a0" stroke-width=".8"/><path d="M8.500,3h2M8.500,5.500h2M8.500,8h2M8.500,10.500h2" stroke="#1b2f66" stroke-width=".9"/><rect x="10.500" y="9" width="1.400" height="8" fill="#e8223a"/><circle cx="11.200" cy="17.800" r="3" fill="#ee2c44" stroke="#2d52a0" stroke-width=".8"/></svg>
<span class="t" style="left:971.6px;top:513.3px;font-size:14px;line-height:14px;letter-spacing:-0.05px;color:#111;">Sensors</span>
<svg width="22" height="22" viewBox="0 0 22 22" style="left:945px;top:533.5px"><rect x="8" y="3.500" width="13" height="12" rx="1" fill="#e8e8e6" stroke="#aaa" stroke-width=".8" transform="rotate(-8 14 9)"/><path d="M20.500,1l-6,7.500" stroke="#888" stroke-width="1.600"/><path d="M14,9l.8,-1" stroke="#333" stroke-width="1.500"/><path d="M3,3q2,4 3.500,8" fill="none" stroke="#999" stroke-width=".8"/><rect x="1.500" y="9.500" width="9.500" height="11.500" rx="3" fill="#dcdcdc" stroke="#8a8a8a" stroke-width=".9"/><rect x="5" y="9" width="2.500" height="5" rx="1.200" fill="#999" stroke="#666" stroke-width=".6"/></svg>
<span class="t" style="left:971.6px;top:537.3px;font-size:14px;line-height:14px;letter-spacing:0.32px;color:#111;">Input Devices</span>
<svg width="22" height="22" viewBox="0 0 22 22" style="left:945px;top:557px"><path d="M4,4.500h14l3,8.500h-20z" fill="#ededed" stroke="#8f8f8f" stroke-width=".9"/><rect x="1" y="13" width="20" height="6.500" rx="1" fill="#e2e2e2" stroke="#7f7f7f" stroke-width=".9"/><rect x="3.500" y="15" width="12" height="2.500" fill="#bdbdbd"/><path d="M5,15v2.500M7,15v2.500M9,15v2.500M11,15v2.500M13,15v2.500" stroke="#d8d8d8" stroke-width=".7"/></svg>
<span class="t" style="left:971.6px;top:560.8px;font-size:14px;line-height:14px;letter-spacing:0.14px;color:#111;">Storage</span>
<svg width="22" height="22" viewBox="0 0 22 22" style="left:945px;top:581px"><ellipse cx="11" cy="21.200" rx="5" ry=".9" fill="#000" opacity=".2"/><path d="M11,1.500L20.500,11L11,20.500L1.500,11Z" fill="#f3962a" stroke="#d97612" stroke-width="1"/><path d="M11,3L19,11L11,19L3,11Z" fill="none" stroke="#ffd49a" stroke-width=".8"/><path d="M9,5q5,6 1,12M13,5q-4,6 0,12" fill="none" stroke="#ffe0b4" stroke-width="1" opacity=".8"/></svg>
<span class="t" style="left:971.6px;top:584.8px;font-size:14px;line-height:14px;letter-spacing:0.01px;color:#111;">Resources</span>
<div style="left:934px;top:606px;width:13px;height:3px;background:#4a66b0;border:1px solid #2a3a70;border-bottom:0"></div>
<div class="tr" style="left:1127px;top:94px;width:15px;height:516px;"></div>
<div class="sb" style="left:1127px;top:94px;width:15px;height:15px;border-radius:4px 4px 0 0"></div>
<div class="sb" style="left:1127px;top:595px;width:15px;height:15px;border-radius:0 0 4px 4px"></div>
<div class="thv" style="left:1127px;top:108px;width:15px;height:285px;"></div>
<svg width="15" height="516" viewBox="0 0 15 516" style="left:1127px;top:94px" fill="none"><path d="M4,9l3.500,-3.500l3.500,3.500" stroke="#b0acac" stroke-width="1.300"/><path d="M4,506.500l3.500,3.500l3.500,-3.500" stroke="#222" stroke-width="1.500"/><path d="M5,153.500h5M5,156.500h5M5,159.500h5" stroke="#4a6a9c" stroke-width="1"/></svg>
<div style="left:1143.5px;top:330px;width:3px;height:46px;background:repeating-linear-gradient(#efefef 0,#efefef 1.500px,#c4c4c4 1.500px,#c4c4c4 2.500px,#efefef 2.500px,#efefef 3px)"></div>
<div style="left:1148px;top:94px;width:540px;height:498px;background:#fff;border:1px solid #9b9793"></div>
<svg width="13" height="8" viewBox="0 0 13 8" style="left:1150.5px;top:101.5px"><path d="M1,1H12L6.500,7Z" fill="#fff" stroke="#000" stroke-width="1.200" stroke-linejoin="miter"/></svg>
<span class="t" style="left:1172.5px;top:98.1px;font-size:14px;line-height:14px;letter-spacing:0.33px;color:#111;">Version</span>
<span class="t" style="left:1190.5px;top:119.1px;font-size:14px;line-height:14px;letter-spacing:0.25px;color:#111;">Kernel</span>
<span class="t" style="left:1190.5px;top:140.1px;font-size:14px;line-height:14px;letter-spacing:0.36px;color:#111;">Compiled</span>
<span class="t" style="left:1190.5px;top:161.1px;font-size:14px;line-height:14px;letter-spacing:0.13px;color:#111;">C Library</span>
<span class="t" style="left:1190.5px;top:182.1px;font-size:14px;line-height:14px;letter-spacing:0.32px;color:#111;">Default C Compiler</span>
<span class="t" style="left:1190.5px;top:203.1px;font-size:14px;line-height:14px;letter-spacing:0.50px;color:#111;">Distribution</span>
<svg width="13" height="8" viewBox="0 0 13 8" style="left:1150.5px;top:227.5px"><path d="M1,1H12L6.500,7Z" fill="#fff" stroke="#000" stroke-width="1.200" stroke-linejoin="miter"/></svg>
<span class="t" style="left:1172.5px;top:224.1px;font-size:14px;line-height:14px;letter-spacing:0.11px;color:#111;">Current Session</span>
<span class="t" style="left:1190.5px;top:245.1px;font-size:14px;line-height:14px;letter-spacing:0.33px;color:#111;">Computer Name</span>
<span class="t" style="left:1190.5px;top:266.1px;font-size:14px;line-height:14px;letter-spacing:0.24px;color:#111;">User Name</span>
<span class="t" style="left:1190.5px;top:287.1px;font-size:14px;line-height:14px;letter-spacing:0.41px;color:#111;">Home Directory</span>
<span class="t" style="left:1190.5px;top:308.1px;font-size:14px;line-height:14px;letter-spacing:0.38px;color:#111;">Desktop Environment</span>
<svg width="13" height="8" viewBox="0 0 13 8" style="left:1150.5px;top:332.5px"><path d="M1,1H12L6.500,7Z" fill="#fff" stroke="#000" stroke-width="1.200" stroke-linejoin="miter"/></svg>
<span class="t" style="left:1172.5px;top:329.1px;font-size:14px;line-height:14px;letter-spacing:0.31px;color:#111;">Misc</span>
<span class="t" style="left:1190.5px;top:350.1px;font-size:14px;line-height:14px;letter-spacing:0.61px;color:#111;">Uptime</span>
<span class="t" style="left:1190.5px;top:371.1px;font-size:14px;line-height:14px;letter-spacing:0.24px;color:#111;">Load Average</span>
<div style="left:1149px;top:95px;width:538px;height:496px;overflow:hidden"><span class="t" style="left:190.5px;top:24.1px;font-size:14px;line-height:14px;letter-spacing:0.06px;color:#111;">Linux 5.2.0-rc3_A-EON_X1000_Nemo (ppc64)</span><span class="t" style="left:190.5px;top:45.1px;font-size:14px;line-height:14px;letter-spacing:-0.03px;color:#111;">#1 SMP Mon Jun 3 00:22:13 CEST 2019</span><span class="t" style="left:190.5px;top:66.1px;font-size:14px;line-height:14px;letter-spacing:0.38px;color:#111;">Unknown</span><span class="t" style="left:190.5px;top:87.1px;font-size:14px;line-height:14px;letter-spacing:0.25px;color:#111;">GNU C Compiler version 4.9.2 (Debian 4.9.2-10+deb8u1)</span><span class="t" style="left:190.5px;top:108.1px;font-size:14px;line-height:14px;letter-spacing:0.20px;color:#111;">Debian GNU/Linux 8.11</span><span class="t" style="left:190.5px;top:150.1px;font-size:14px;line-height:14px;letter-spacing:0.44px;color:#111;">amigaone</span><span class="t" style="left:190.5px;top:171.1px;font-size:14px;line-height:14px;letter-spacing:0.38px;color:#111;">tata (Martin Hrebec)</span><span class="t" style="left:190.5px;top:192.1px;font-size:14px;line-height:14px;letter-spacing:0.48px;color:#111;">/home/tata</span><span class="t" style="left:190.5px;top:213.1px;font-size:14px;line-height:14px;letter-spacing:0.27px;color:#111;">Unknown (Window Manager: Openbox)</span><span class="t" style="left:190.5px;top:255.1px;font-size:14px;line-height:14px;letter-spacing:0.48px;color:#111;">3 minutes</span><span class="t" style="left:190.5px;top:276.1px;font-size:14px;line-height:14px;letter-spacing:0.17px;color:#111;">0,00, 0,00, 0,00</span></div>
<div class="tr" style="left:1690px;top:94px;width:15px;height:498px;"></div>
<div class="sb" style="left:1690px;top:94px;width:15px;height:15px;border-radius:4px 4px 0 0"></div>
<div class="sb" style="left:1690px;top:577px;width:15px;height:15px;border-radius:0 0 4px 4px"></div>
<div class="thv" style="left:1690px;top:108px;width:15px;height:470px;"></div>
<svg width="15" height="498" viewBox="0 0 15 498" style="left:1690px;top:94px" fill="none"><path d="M4,9l3.500,-3.500l3.500,3.500" stroke="#b0acac" stroke-width="1.300"/><path d="M4,488.500l3.500,3.500l3.500,-3.500" stroke="#b0acac" stroke-width="1.300"/><path d="M5,246.500h5M5,249.500h5M5,252.500h5" stroke="#4a6a9c" stroke-width="1"/></svg>
<div class="tr" style="left:1148px;top:595px;width:539px;height:15px;"></div>
<div class="sb" style="left:1148px;top:595px;width:15px;height:15px;border-radius:4px 0 0 4px"></div>
<div class="sb" style="left:1672px;top:595px;width:15px;height:15px;border-radius:0 4px 4px 0"></div>
<div class="thh" style="left:1162px;top:595px;width:482px;height:15px;"></div>
<svg width="539" height="15" viewBox="0 0 539 15" style="left:1148px;top:595px" fill="none"><path d="M9,4l-3.500,3.500l3.500,3.500" stroke="#b0acac" stroke-width="1.300"/><path d="M529.500,4l3.500,3.500l-3.500,3.500" stroke="#222" stroke-width="1.500"/><path d="M250.500,5v5M253.500,5v5M256.500,5v5" stroke="#4a6a9c" stroke-width="1"/></svg>
<span class="t" style="left:909.5px;top:613.1px;font-size:14px;line-height:14px;letter-spacing:0.13px;color:#000;">Done.</span>
<div style="left:700px;top:641px;width:661px;height:411px;background:#efefe8;border:1px solid #2e2e2e"></div>
<div class="tb" style="left:701px;top:642px;width:659px;height:22px;"></div>
<svg width="16" height="16" viewBox="0 0 16 16" style="left:705px;top:645px"><rect x=".5" y="1.5" width="13" height="9" rx="1" fill="#1a1a1a" stroke="#444"/><path d="M1,2h12L1,9z" fill="#555" opacity=".6"/><rect x="5" y="11" width="4" height="2" fill="#ccc"/><rect x="3" y="13" width="8" height="1.2" fill="#ddd"/></svg>
<span class="t" style="left:945.5px;top:644.6px;font-size:13.5px;line-height:13.5px;letter-spacing:1.23px;color:#7b7b78;font-weight:bold;">tata@amigaone: ~</span>
<svg width="46" height="8" viewBox="0 0 46 8" style="left:1313px;top:648px" shape-rendering="crispEdges"><rect x="0" y="5" width="6" height="2" fill="#6e6e6e"/><path d="M17,1h6v6h-6zM18,3v3h4v-3z" fill="#6e6e6e" fill-rule="evenodd"/><path d="M34,1h2v1h2v-1h2v2h-1v2h1v2h-2v-1h-2v1h-2v-2h1v-2h-1z" fill="#6e6e6e"/></svg>
<div class="mb" style="left:701px;top:664px;width:659px;height:24px;"></div>
<span class="t" style="left:709.5px;top:668.1px;font-size:14px;line-height:14px;letter-spacing:-0.02px;color:#000;"><u>S</u>oubor</span>
<span class="t" style="left:768.5px;top:668.1px;font-size:14px;line-height:14px;letter-spacing:0.52px;color:#000;"><u>U</u>pravit</span>
<span class="t" style="left:830.5px;top:668.1px;font-size:14px;line-height:14px;letter-spacing:0.46px;color:#000;"><u>K</u>arty</span>
<span class="t" style="left:879.5px;top:668.1px;font-size:14px;line-height:14px;letter-spacing:0.27px;color:#000;"><u>N</u>ápověda</span>
<div style="left:702px;top:688px;width:642px;height:362px;background:#000"></div>
<span class="t" style="left:703px;top:689.8px;font-family:'Liberation Mono',monospace;font-size:13.38px;line-height:15px;color:#b4b4b4;letter-spacing:0">tata@amigaone:~$ glxgears</span>
<span class="t" style="left:703px;top:704.8px;font-family:'Liberation Mono',monospace;font-size:13.38px;line-height:15px;color:#b4b4b4;letter-spacing:0">514 frames in 5.0 seconds = 102.645 FPS</span>
<span class="t" style="left:703px;top:719.8px;font-family:'Liberation Mono',monospace;font-size:13.38px;line-height:15px;color:#b4b4b4;letter-spacing:0">506 frames in 5.0 seconds = 101.009 FPS</span>
<span class="t" style="left:703px;top:734.8px;font-family:'Liberation Mono',monospace;font-size:13.38px;line-height:15px;color:#b4b4b4;letter-spacing:0">508 frames in 5.0 seconds = 101.593 FPS</span>
<span class="t" style="left:703px;top:749.8px;font-family:'Liberation Mono',monospace;font-size:13.38px;line-height:15px;color:#b4b4b4;letter-spacing:0">503 frames in 5.0 seconds = 100.456 FPS</span>
<span class="t" style="left:703px;top:764.8px;font-family:'Liberation Mono',monospace;font-size:13.38px;line-height:15px;color:#b4b4b4;letter-spacing:0">475 frames in 5.0 seconds = 94.897 FPS</span>
<div style="left:702px;top:778px;width:9px;height:16px;border:1px solid #b4b4b4"></div>
<div style="left:1344px;top:688px;width:15px;height:362px;background:#efefef"></div>
<div class="sb" style="left:1344px;top:688px;width:15px;height:15px;border-radius:4px 4px 0 0"></div>
<div class="sb" style="left:1344px;top:1035px;width:15px;height:15px;border-radius:0 0 4px 4px"></div>
<div class="thv" style="left:1344px;top:702px;width:15px;height:334px;"></div>
<svg width="15" height="362" viewBox="0 0 15 362" style="left:1344px;top:688px" fill="none"><path d="M4,9l3.5,-3.5l3.5,3.5" stroke="#b0acac" stroke-width="1.3"/><path d="M4,353l3.5,3.500l3.500,-3.500" stroke="#b0acac" stroke-width="1.3"/><path d="M5,177.500h5M5,180.500h5M5,183.500h5" stroke="#4a6a9c" stroke-width="1"/></svg>
<div style="left:0px;top:0px;width:304px;height:325px;background:#1b1b1b"></div>
<div style="left:1px;top:1px;width:302px;height:22px;background:linear-gradient(#7b7b7b 0,#7b7b7b 1px,#4e4e4e 1px,#464646 10px,#212121 10px,#202020 19px,#2b2b2b 20px,#1d1d1d 22px)"></div>
<div style="left:5px;top:4px;width:14px;height:14px;background:linear-gradient(#8b7159 0,#8b7159 4px,#f6dadc 4px,#e8bcc0 10px,#d8a4a8 14px)"></div>
<span class="t" style="left:104.5px;top:3.6px;font-size:13.5px;line-height:13.5px;letter-spacing:0.81px;color:#fff;font-weight:bold;text-shadow:0 1px 0 #000;">glxgears</span>
<svg width="46" height="8" viewBox="0 0 46 8" style="left:256px;top:7px" shape-rendering="crispEdges"><rect x="0" y="5" width="6" height="2" fill="#f0f0ea"/><path d="M17,1h6v6h-6zM18,3v3h4v-3z" fill="#f0f0ea" fill-rule="evenodd"/><path d="M34,1h2v1h2v-1h2v2h-1v2h1v2h-2v-1h-2v1h-2v-2h1v-2h-1z" fill="#f0f0ea"/></svg>
<div style="left:2px;top:23px;width:300px;height:300px;background:#000;overflow:hidden"><svg width="304" height="325" viewBox="0 0 304 325" shape-rendering="crispEdges" style="left:-2px;top:-23px"><path d="M196.7,193.4 197.4,190.8 217.2,202.2 216.5,204.8" fill="#004612" stroke="#004612" stroke-width=".6"/>
<path d="M197.4,190.8 197.4,188.3 217.2,199.6 217.2,202.2" fill="#00290a" stroke="#00290a" stroke-width=".6"/>
<path d="M197.4,188.3 196.6,186.1 216.5,197.3 217.2,199.6" fill="#00290a" stroke="#00290a" stroke-width=".6"/>
<path d="M196.6,186.1 195.3,184.4 215.1,195.5 216.5,197.3" fill="#00290a" stroke="#00290a" stroke-width=".6"/>
<path d="M185.0,198.4 186.9,199.4 206.4,211.2 204.5,210.2" fill="#009d27" stroke="#009d27" stroke-width=".6"/>
<path d="M186.9,199.4 189.1,199.6 208.6,211.4 206.4,211.2" fill="#00ad2b" stroke="#00ad2b" stroke-width=".6"/>
<path d="M189.1,199.6 191.4,199.0 211.0,210.7 208.6,211.4" fill="#00b02c" stroke="#00b02c" stroke-width=".6"/>
<path d="M191.4,199.0 193.6,197.7 213.2,209.3 211.0,210.7" fill="#00a529" stroke="#00a529" stroke-width=".6"/>
<path d="M193.6,197.7 195.4,195.7 215.1,207.3 213.2,209.3" fill="#008e24" stroke="#008e24" stroke-width=".6"/>
<path d="M195.4,195.7 196.7,193.4 216.5,204.8 215.1,207.3" fill="#006e1b" stroke="#006e1b" stroke-width=".6"/>
<path d="M243.8,199.7 234.2,196.3 214.0,185.3 223.4,188.7" fill="#00a529" stroke="#00a529" stroke-width=".6"/>
<path d="M206.0,230.8 209.9,241.3 190.6,228.6 186.7,218.4" fill="#00290a" stroke="#00290a" stroke-width=".6"/>
<path d="M240.9,177.0 229.7,181.4 209.5,170.9 220.3,166.6" fill="#00ad2b" stroke="#00ad2b" stroke-width=".6"/>
<path d="M192.2,227.1 189.1,240.1 170.3,227.2 173.2,214.7" fill="#004211" stroke="#004211" stroke-width=".6"/>
<path d="M230.5,165.6 225.9,163.4 205.5,153.4 210.1,155.5" fill="#00a229" stroke="#00a229" stroke-width=".6"/>
<path d="M189.6,224.5 192.2,227.1 173.2,214.7 170.6,212.2" fill="#00290a" stroke="#00290a" stroke-width=".6"/>
<path d="M225.9,163.4 217.5,174.4 197.4,163.9 205.5,153.4" fill="#008221" stroke="#008221" stroke-width=".6"/>
<path d="M217.5,174.4 213.7,174.3 193.6,163.8 197.4,163.9" fill="#00af2c" stroke="#00af2c" stroke-width=".6"/>
<path d="M175.5,224.4 177.9,229.5 159.2,216.8 156.8,211.9" fill="#00290a" stroke="#00290a" stroke-width=".6"/>
<path d="M184.5,209.6 184.9,213.9 165.9,201.8 165.4,197.7" fill="#00290a" stroke="#00290a" stroke-width=".6"/>
<path d="M184.9,213.9 175.5,224.4 156.8,211.9 165.9,201.8" fill="#008c23" stroke="#008c23" stroke-width=".6"/>
<path d="M201.9,178.3 198.2,180.9 178.6,170.0 182.2,167.5" fill="#00a028" stroke="#00a028" stroke-width=".6"/>
<path d="M204.0,164.7 201.9,178.3 182.2,167.5 184.1,154.4" fill="#00350d" stroke="#00350d" stroke-width=".6"/>
<path d="M209.7,162.9 204.0,164.7 184.1,154.4 189.6,152.7" fill="#00ae2c" stroke="#00ae2c" stroke-width=".6"/>
<path d="M189.2,191.8 187.1,196.1 167.9,184.7 169.9,180.5" fill="#006419" stroke="#006419" stroke-width=".6"/>
<path d="M198.2,180.9 188.2,175.9 168.8,165.1 178.6,170.0" fill="#009f28" stroke="#009f28" stroke-width=".6"/>
<path d="M187.1,196.1 175.0,199.7 156.1,188.0 167.9,184.7" fill="#00af2c" stroke="#00af2c" stroke-width=".6"/>
<path d="M183.8,181.1 189.2,191.8 169.9,180.5 164.6,170.1" fill="#00290a" stroke="#00290a" stroke-width=".6"/>
<path d="M175.0,199.7 173.8,206.2 155.0,194.2 156.1,188.0" fill="#003c0f" stroke="#003c0f" stroke-width=".6"/>
<path d="M188.2,175.9 183.8,181.1 164.6,170.1 168.8,165.1" fill="#008722" stroke="#008722" stroke-width=".6"/>
<path fill-rule="evenodd" d="M231.5,209.3 242.5,205.9 243.8,199.7 234.2,196.3 234.0,192.2 242.8,182.1 240.9,177.0 229.7,181.4 227.3,178.8 230.5,165.6 225.9,163.4 217.5,174.4 213.7,174.3 209.7,162.9 204.0,164.7 201.9,178.3 198.2,180.9 188.2,175.9 183.8,181.1 189.2,191.8 187.1,196.1 175.0,199.7 173.8,206.2 184.5,209.6 184.9,213.9 175.5,224.4 177.9,229.5 189.6,224.5 192.2,227.1 189.1,240.1 193.9,241.8 202.2,230.9 206.0,230.8 209.9,241.3 215.3,239.2 217.4,226.5 220.9,223.9 230.1,228.2 234.1,223.2 229.5,213.4ZM216.5,204.8 216.9,203.5 217.2,202.2 217.3,200.9 217.2,199.6 216.9,198.4 216.5,197.3 215.9,196.3 215.1,195.5 214.2,194.9 213.2,194.5 212.1,194.3 211.0,194.3 209.8,194.5 208.6,194.9 207.4,195.5 206.3,196.3 205.3,197.3 204.4,198.4 203.6,199.6 203.0,200.9 202.6,202.2 202.3,203.6 202.2,204.9 202.3,206.2 202.6,207.4 203.1,208.5 203.7,209.4 204.5,210.2 205.4,210.8 206.4,211.2 207.5,211.4 208.6,211.4 209.8,211.2 211.0,210.7 212.1,210.1 213.2,209.3 214.2,208.4 215.1,207.3 215.9,206.1Z" fill="#00c130"/>
<path d="M114.8,209.4 114.2,206.8 122.9,213.2 123.5,215.8" fill="#290500" stroke="#290500" stroke-width=".6"/>
<path d="M114.2,206.8 113.1,204.5 121.9,210.8 122.9,213.2" fill="#290500" stroke="#290500" stroke-width=".6"/>
<path d="M113.1,204.5 111.8,202.4 120.5,208.7 121.9,210.8" fill="#290500" stroke="#290500" stroke-width=".6"/>
<path d="M111.8,202.4 110.1,200.7 118.8,207.0 120.5,208.7" fill="#290500" stroke="#290500" stroke-width=".6"/>
<path d="M86.2,230.2 88.3,231.6 96.6,238.5 94.5,237.2" fill="#931200" stroke="#931200" stroke-width=".6"/>
<path d="M88.3,231.6 90.6,232.5 99.0,239.4 96.6,238.5" fill="#9f1400" stroke="#9f1400" stroke-width=".6"/>
<path d="M90.6,232.5 93.1,233.0 101.5,239.9 99.0,239.4" fill="#a81500" stroke="#a81500" stroke-width=".6"/>
<path d="M93.1,233.0 95.7,233.1 104.1,240.0 101.5,239.9" fill="#ae1600" stroke="#ae1600" stroke-width=".6"/>
<path d="M95.7,233.1 98.3,232.7 106.8,239.6 104.1,240.0" fill="#b01600" stroke="#b01600" stroke-width=".6"/>
<path d="M98.3,232.7 101.0,232.0 109.5,238.8 106.8,239.6" fill="#af1600" stroke="#af1600" stroke-width=".6"/>
<path d="M101.0,232.0 103.5,230.8 112.1,237.6 109.5,238.8" fill="#ab1500" stroke="#ab1500" stroke-width=".6"/>
<path d="M103.5,230.8 105.9,229.2 114.5,236.0 112.1,237.6" fill="#a41400" stroke="#a41400" stroke-width=".6"/>
<path d="M105.9,229.2 108.2,227.4 116.8,234.1 114.5,236.0" fill="#991300" stroke="#991300" stroke-width=".6"/>
<path d="M108.2,227.4 110.1,225.2 118.8,231.9 116.8,234.1" fill="#8c1100" stroke="#8c1100" stroke-width=".6"/>
<path d="M110.1,225.2 111.8,222.8 120.5,229.5 118.8,231.9" fill="#7c1000" stroke="#7c1000" stroke-width=".6"/>
<path d="M111.8,222.8 113.2,220.2 121.9,226.8 120.5,229.5" fill="#6b0d00" stroke="#6b0d00" stroke-width=".6"/>
<path d="M113.2,220.2 114.2,217.5 122.9,224.1 121.9,226.8" fill="#570b00" stroke="#570b00" stroke-width=".6"/>
<path d="M114.2,217.5 114.8,214.8 123.5,221.3 122.9,224.1" fill="#430800" stroke="#430800" stroke-width=".6"/>
<path d="M114.8,214.8 115.0,212.0 123.7,218.5 123.5,221.3" fill="#2e0600" stroke="#2e0600" stroke-width=".6"/>
<path d="M115.0,212.0 114.8,209.4 123.5,215.8 123.7,218.5" fill="#290500" stroke="#290500" stroke-width=".6"/>
<path d="M178.0,207.2 166.9,204.6 157.6,198.6 168.5,201.2" fill="#a91500" stroke="#a91500" stroke-width=".6"/>
<path d="M116.5,281.8 123.8,290.2 115.3,282.6 108.1,274.2" fill="#290500" stroke="#290500" stroke-width=".6"/>
<path d="M175.3,184.8 163.1,186.2 153.7,180.5 165.7,179.1" fill="#b01600" stroke="#b01600" stroke-width=".6"/>
<path d="M97.4,286.6 101.4,297.8 93.2,289.9 89.3,278.8" fill="#290500" stroke="#290500" stroke-width=".6"/>
<path d="M165.9,165.2 153.7,170.7 144.4,165.2 156.4,159.9" fill="#ab1500" stroke="#ab1500" stroke-width=".6"/>
<path d="M78.6,285.3 78.7,298.3 70.9,290.3 70.7,277.4" fill="#290500" stroke="#290500" stroke-width=".6"/>
<path d="M150.4,150.4 139.4,159.7 130.2,154.3 141.0,145.3" fill="#981300" stroke="#981300" stroke-width=".6"/>
<path d="M139.4,159.7 135.2,157.8 126.0,152.5 130.2,154.3" fill="#a21400" stroke="#a21400" stroke-width=".6"/>
<path d="M62.0,277.6 57.9,291.3 50.4,283.3 54.3,269.8" fill="#4e0a00" stroke="#4e0a00" stroke-width=".6"/>
<path d="M135.4,143.5 129.9,142.2 120.8,137.1 126.2,138.5" fill="#aa1500" stroke="#aa1500" stroke-width=".6"/>
<path d="M129.9,142.2 121.3,154.6 112.4,149.2 120.8,137.1" fill="#7b0f00" stroke="#7b0f00" stroke-width=".6"/>
<path d="M121.3,154.6 116.4,154.3 107.5,149.0 112.4,149.2" fill="#af1600" stroke="#af1600" stroke-width=".6"/>
<path d="M41.2,277.1 44.9,281.3 37.5,273.3 33.8,269.2" fill="#290500" stroke="#290500" stroke-width=".6"/>
<path d="M49.2,264.2 41.2,277.1 33.8,269.2 41.7,256.5" fill="#750f00" stroke="#750f00" stroke-width=".6"/>
<path d="M46.9,260.0 49.2,264.2 41.7,256.5 39.4,252.4" fill="#290500" stroke="#290500" stroke-width=".6"/>
<path d="M112.3,141.1 106.3,141.7 97.4,136.6 103.4,136.0" fill="#b01600" stroke="#b01600" stroke-width=".6"/>
<path d="M106.3,141.7 101.2,156.1 92.5,150.7 97.4,136.6" fill="#560b00" stroke="#560b00" stroke-width=".6"/>
<path d="M101.2,156.1 96.1,157.6 87.5,152.1 92.5,150.7" fill="#af1600" stroke="#af1600" stroke-width=".6"/>
<path d="M41.1,240.9 42.0,246.0 34.5,238.6 33.7,233.7" fill="#290500" stroke="#290500" stroke-width=".6"/>
<path d="M30.5,256.7 32.5,262.3 25.2,254.6 23.2,249.1" fill="#290500" stroke="#290500" stroke-width=".6"/>
<path d="M42.0,246.0 30.5,256.7 23.2,249.1 34.5,238.6" fill="#941200" stroke="#941200" stroke-width=".6"/>
<path d="M81.1,164.5 76.3,167.6 68.0,161.8 72.7,158.8" fill="#a11400" stroke="#a11400" stroke-width=".6"/>
<path d="M81.8,149.6 81.1,164.5 72.7,158.8 73.3,144.2" fill="#2c0600" stroke="#2c0600" stroke-width=".6"/>
<path d="M42.1,219.5 41.2,224.9 33.6,217.9 34.5,212.6" fill="#3e0800" stroke="#3e0800" stroke-width=".6"/>
<path d="M87.8,146.8 81.8,149.6 73.3,144.2 79.3,141.5" fill="#aa1500" stroke="#aa1500" stroke-width=".6"/>
<path d="M41.2,224.9 27.4,232.1 20.1,224.9 33.6,217.9" fill="#a81500" stroke="#a81500" stroke-width=".6"/>
<path d="M63.2,178.9 59.3,183.3 51.4,177.2 55.2,172.9" fill="#881100" stroke="#881100" stroke-width=".6"/>
<path d="M76.3,167.6 64.6,160.6 56.4,154.9 68.0,161.8" fill="#991300" stroke="#991300" stroke-width=".6"/>
<path d="M49.7,198.0 47.2,203.2 39.5,196.7 41.9,191.5" fill="#660d00" stroke="#660d00" stroke-width=".6"/>
<path d="M27.4,232.1 27.4,238.5 20.1,231.2 20.1,224.9" fill="#290500" stroke="#290500" stroke-width=".6"/>
<path d="M59.3,165.2 63.2,178.9 55.2,172.9 51.3,159.4" fill="#290500" stroke="#290500" stroke-width=".6"/>
<path d="M47.2,203.2 32.4,205.8 25.0,199.1 39.5,196.7" fill="#b01600" stroke="#b01600" stroke-width=".6"/>
<path d="M59.3,183.3 45.3,181.0 37.6,174.9 51.4,177.2" fill="#ab1500" stroke="#ab1500" stroke-width=".6"/>
<path d="M41.4,186.9 49.7,198.0 41.9,191.5 33.8,180.6" fill="#290500" stroke="#290500" stroke-width=".6"/>
<path d="M64.6,160.6 59.3,165.2 51.3,159.4 56.4,154.9" fill="#961300" stroke="#961300" stroke-width=".6"/>
<path d="M32.4,205.8 30.4,212.4 23.0,205.5 25.0,199.1" fill="#520a00" stroke="#520a00" stroke-width=".6"/>
<path d="M45.3,181.0 41.4,186.9 33.8,180.6 37.6,174.9" fill="#780f00" stroke="#780f00" stroke-width=".6"/>
<path fill-rule="evenodd" d="M166.5,199.8 176.6,190.2 175.3,184.8 163.1,186.2 161.3,182.0 168.9,169.7 165.9,165.2 153.7,170.7 150.6,167.4 154.8,153.6 150.4,150.4 139.4,159.7 135.2,157.8 135.4,143.5 129.9,142.2 121.3,154.6 116.4,154.3 112.3,141.1 106.3,141.7 101.2,156.1 96.1,157.6 87.8,146.8 81.8,149.6 81.1,164.5 76.3,167.6 64.6,160.6 59.3,165.2 63.2,178.9 59.3,183.3 45.3,181.0 41.4,186.9 49.7,198.0 47.2,203.2 32.4,205.8 30.4,212.4 42.1,219.5 41.2,224.9 27.4,232.1 27.4,238.5 41.1,240.9 42.0,246.0 30.5,256.7 32.5,262.3 46.9,260.0 49.2,264.2 41.2,277.1 44.9,281.3 58.4,274.8 62.0,277.6 57.9,291.3 62.8,293.8 74.2,283.9 78.6,285.3 78.7,298.3 84.3,298.9 92.6,286.8 97.4,286.6 101.4,297.8 107.1,296.5 111.8,283.5 116.5,281.8 123.8,290.2 129.1,287.3 130.1,274.5 134.3,271.5 144.1,276.5 148.6,272.3 145.8,260.8 149.2,256.8 160.6,258.0 164.0,252.8 157.8,243.6 160.1,238.9 172.1,236.3 174.1,230.6 165.1,224.3 166.1,219.4 177.6,213.1 178.0,207.2 166.9,204.6ZM123.5,215.8 122.9,213.2 121.9,210.8 120.5,208.7 118.8,207.0 116.8,205.5 114.5,204.5 112.0,203.9 109.3,203.8 106.6,204.1 103.9,204.9 101.2,206.0 98.7,207.6 96.3,209.6 94.2,211.8 92.5,214.4 91.0,217.1 90.0,219.9 89.4,222.8 89.2,225.6 89.5,228.4 90.2,231.0 91.2,233.4 92.7,235.4 94.5,237.2 96.6,238.5 99.0,239.4 101.5,239.9 104.1,240.0 106.8,239.6 109.5,238.8 112.1,237.6 114.5,236.0 116.8,234.1 118.8,231.9 120.5,229.5 121.9,226.8 122.9,224.1 123.5,221.3 123.7,218.5Z" fill="#c11800"/>
<path d="M113.4,116.7 117.0,109.6 121.6,111.8 117.9,119.0" fill="#1a1a84" stroke="#1a1a84" stroke-width=".6"/>
<path d="M117.0,109.6 118.6,101.8 123.3,103.9 121.6,111.8" fill="#101052" stroke="#101052" stroke-width=".6"/>
<path d="M118.6,101.8 118.0,94.0 122.7,96.1 123.3,103.9" fill="#0a0a33" stroke="#0a0a33" stroke-width=".6"/>
<path d="M118.0,94.0 115.2,87.0 119.8,89.1 122.7,96.1" fill="#0a0a33" stroke="#0a0a33" stroke-width=".6"/>
<path d="M115.2,87.0 110.4,81.5 115.1,83.5 119.8,89.1" fill="#0a0a33" stroke="#0a0a33" stroke-width=".6"/>
<path d="M110.4,81.5 104.1,78.0 108.7,80.0 115.1,83.5" fill="#0a0a33" stroke="#0a0a33" stroke-width=".6"/>
<path d="M80.5,124.2 87.0,127.4 91.3,129.9 84.8,126.7" fill="#2828c8" stroke="#2828c8" stroke-width=".6"/>
<path d="M87.0,127.4 94.2,128.2 98.5,130.6 91.3,129.9" fill="#2b2bd9" stroke="#2b2bd9" stroke-width=".6"/>
<path d="M94.2,128.2 101.4,126.5 105.8,128.9 98.5,130.6" fill="#2c2cdb" stroke="#2c2cdb" stroke-width=".6"/>
<path d="M101.4,126.5 108.0,122.5 112.5,124.9 105.8,128.9" fill="#2929cc" stroke="#2929cc" stroke-width=".6"/>
<path d="M108.0,122.5 113.4,116.7 117.9,119.0 112.5,124.9" fill="#2323ae" stroke="#2323ae" stroke-width=".6"/>
<path d="M107.4,135.2 116.6,144.5 112.1,141.9 102.9,132.7" fill="#0a0a33" stroke="#0a0a33" stroke-width=".6"/>
<path d="M140.6,89.1 127.2,89.1 122.6,87.1 135.8,87.0" fill="#2c2cdc" stroke="#2c2cdc" stroke-width=".6"/>
<path d="M89.0,136.5 90.8,150.9 86.5,148.2 84.7,134.0" fill="#0a0a33" stroke="#0a0a33" stroke-width=".6"/>
<path d="M127.2,66.2 115.3,75.1 110.7,73.2 122.5,64.4" fill="#2727c1" stroke="#2727c1" stroke-width=".6"/>
<path d="M67.5,139.9 72.6,144.2 68.4,141.5 63.4,137.2" fill="#0a0a33" stroke="#0a0a33" stroke-width=".6"/>
<path d="M74.3,125.7 67.5,139.9 63.4,137.2 70.1,123.2" fill="#19197f" stroke="#19197f" stroke-width=".6"/>
<path d="M72.0,121.5 74.3,125.7 70.1,123.2 67.7,119.0" fill="#0a0a33" stroke="#0a0a33" stroke-width=".6"/>
<path d="M109.4,57.9 102.6,57.4 98.1,55.7 104.8,56.2" fill="#2c2cdb" stroke="#2c2cdb" stroke-width=".6"/>
<path d="M102.6,57.4 97.0,72.4 92.5,70.4 98.1,55.7" fill="#161670" stroke="#161670" stroke-width=".6"/>
<path d="M97.0,72.4 92.3,73.7 87.8,71.8 92.5,70.4" fill="#2b2bd9" stroke="#2b2bd9" stroke-width=".6"/>
<path d="M69.8,101.3 69.2,106.6 65.0,104.3 65.6,99.0" fill="#0e0e45" stroke="#0e0e45" stroke-width=".6"/>
<path d="M69.2,106.6 56.0,114.7 51.9,112.3 65.0,104.3" fill="#2828ca" stroke="#2828ca" stroke-width=".6"/>
<path d="M79.5,82.3 76.1,86.5 71.8,84.4 75.1,80.3" fill="#2121a4" stroke="#2121a4" stroke-width=".6"/>
<path d="M56.0,114.7 57.4,121.9 53.3,119.4 51.9,112.3" fill="#0a0a33" stroke="#0a0a33" stroke-width=".6"/>
<path d="M76.1,67.2 79.5,82.3 75.1,80.3 71.7,65.3" fill="#0a0a33" stroke="#0a0a33" stroke-width=".6"/>
<path d="M58.5,92.1 69.8,101.3 65.6,99.0 54.4,90.0" fill="#0a0a33" stroke="#0a0a33" stroke-width=".6"/>
<path d="M76.1,86.5 61.6,85.0 57.4,82.9 71.8,84.4" fill="#2c2cda" stroke="#2c2cda" stroke-width=".6"/>
<path d="M82.3,63.1 76.1,67.2 71.7,65.3 77.9,61.2" fill="#2828c6" stroke="#2828c6" stroke-width=".6"/>
<path d="M61.6,85.0 58.5,92.1 54.4,90.0 57.4,82.9" fill="#181878" stroke="#181878" stroke-width=".6"/>
<path fill-rule="evenodd" d="M122.7,122.7 135.7,123.7 138.5,117.1 128.7,108.7 129.4,103.6 141.5,96.0 140.6,89.1 127.2,89.1 125.1,84.8 131.8,70.9 127.2,66.2 115.3,75.1 111.1,73.2 109.4,57.9 102.6,57.4 97.0,72.4 92.3,73.7 82.3,63.1 76.1,67.2 79.5,82.3 76.1,86.5 61.6,85.0 58.5,92.1 69.8,101.3 69.2,106.6 56.0,114.7 57.4,121.9 72.0,121.5 74.3,125.7 67.5,139.9 72.6,144.2 84.7,134.9 89.0,136.5 90.8,150.9 97.4,150.9 102.8,136.7 107.4,135.2 116.6,144.5 122.3,140.4 119.5,126.7ZM117.9,119.0 120.0,115.6 121.6,111.8 122.7,107.9 123.3,103.9 123.3,100.0 122.7,96.1 121.5,92.5 119.8,89.1 117.7,86.1 115.1,83.5 112.0,81.5 108.7,80.0 105.2,79.2 101.4,78.9 97.7,79.4 93.9,80.5 90.3,82.2 87.0,84.4 83.9,87.3 81.3,90.5 79.1,94.1 77.4,98.0 76.3,102.1 75.8,106.2 76.0,110.3 76.7,114.3 78.0,118.0 79.8,121.3 82.1,124.2 84.8,126.7 87.9,128.6 91.3,129.9 94.9,130.6 98.5,130.6 102.2,130.1 105.8,128.9 109.3,127.2 112.5,124.9 115.4,122.2Z" fill="#3030f2"/></svg></div>
<div style="left:0px;top:1054px;width:1920px;height:26px;background:linear-gradient(#000 0,#000 1px,#8c8c8c 1px,#8c8c8c 2px,#6e6e6e 2px,#5a5a5a 6px,#343434 11.500px,#060606 12px,#0a0c0a 14px,#1c1e1c 18px,#3a3a3a 21px,#5e5e5e 24px,#8a8a8a 26px)"></div>
<svg width="260" height="26" viewBox="0 1054 260 26" style="left:0;top:1054px">
<path d="M24.500,1056.500Q27,1063 32.500,1080H29.500Q26,1068 22.500,1062Z" fill="#e6e6e6"/><path d="M24.500,1056.500L4,1069.500L6,1070.500L22,1062Z" fill="#d8d8d8"/><g stroke="#cfcfcf" fill="none"><path d="M23,1060Q14,1068 8,1077" stroke-width="1.300" opacity=".8"/><path d="M23,1061Q17,1070 12,1079" stroke-width="1.100" opacity=".6"/></g>
<rect x="39.500" y="1058.500" width="15" height="17" rx="2" fill="#2a2a2a" stroke="#111"/><path d="M42,1064h8l2,3v2h-10z" fill="#f4f4f4"/><rect x="42" y="1070" width="10" height="3" fill="#1a1a1a"/>
<circle cx="74" cy="1067" r="10.500" fill="#2a7fe0" stroke="#1a4fa8" stroke-width=".8"/><path d="M66,1061q6,-6 13,-2q4,3 4,8q0,6 -5,9q-6,3 -10,-1q5,2 8,-2q2,-4 -2,-6q-3,-1 -4,-4q-2,0 -4,-2z" fill="#e4e4e4"/><path d="M64,1064q1,7 6,11q4,3 9,1q-6,1 -9,-4q-2,-4 0,-7q-3,1 -6,-1z" fill="#1c5fd0"/><path d="M82,1060q3,6 0,11q-3,5 -8,6q7,-3 8,-9q0,-4 0,-8z" fill="#2cc0ea"/>
<rect x="91.500" y="1057.500" width="19" height="14" rx="1" fill="#141414" stroke="#9a9a9a"/><path d="M92,1058h18l-18,11z" fill="#4a4a4a" opacity=".7"/><rect x="98" y="1072" width="6" height="3" fill="#bbb"/><ellipse cx="101" cy="1076" rx="5" ry="1.500" fill="#ddd"/>
<rect x="117.500" y="1058" width="19.500" height="17" rx="2" fill="#6d645c" stroke="#4a443e"/><rect x="119.500" y="1059.500" width="15.500" height="12" fill="#b81e1e"/><path d="M119.500,1059.500h15.500l-15.500,7z" fill="#d24a4a" opacity=".6"/>
<rect x="150.500" y="1063.500" width="15" height="12" fill="#e8e8e8" stroke="#fff"/><rect x="150.500" y="1063.500" width="15" height="2.500" fill="#4a78c0"/><rect x="146" y="1058.500" width="15" height="12.500" fill="#dedede" stroke="#fff"/><rect x="146" y="1058.500" width="15" height="2.500" fill="#3a68b0"/>
<rect x="174" y="1056" width="39" height="23" fill="#4a74ad"/><rect x="174" y="1056" width="5" height="5" fill="#c9dcf4"/><rect x="180.500" y="1057.500" width="8" height="13.500" fill="#7fa2da" stroke="#fff"/><rect x="193.500" y="1056.500" width="14" height="10" fill="#7fa2da" stroke="#fff"/><rect x="189.500" y="1068.500" width="11" height="8" fill="#7fa2da" stroke="#fff"/>
<rect x="214" y="1056" width="39" height="23" fill="#b3aaaa"/>
</svg>
<span class="t" style="left:121.0px;top:1061.8px;font-size:8.5px;line-height:8.5px;letter-spacing:0.77px;color:#fff;font-weight:bold;">#_</span>
<div style="left:259.5px;top:1055px;width:148.5px;height:25px;background:linear-gradient(#ffffff,#fbfafa 50%,#e9e6e6);border:1px solid #fff;border-radius:5px;box-shadow:inset 0 0 0 1px #a39e9e"></div>
<span class="t" style="left:283.8px;top:1059.6px;font-size:14px;line-height:14px;letter-spacing:-0.58px;color:#000;">NEMOBOOT</span>
<div style="left:410.5px;top:1055px;width:148.5px;height:25px;background:linear-gradient(#ffffff,#fbfafa 50%,#e9e6e6);border:1px solid #fff;border-radius:5px;box-shadow:inset 0 0 0 1px #a39e9e"></div>
<span class="t" style="left:434.8px;top:1059.6px;font-size:14px;line-height:14px;letter-spacing:0.50px;color:#000;">tata@amigaone: ~</span>
<div style="left:561.5px;top:1055px;width:148.5px;height:25px;background:linear-gradient(#ffffff,#fbfafa 50%,#e9e6e6);border:1px solid #fff;border-radius:5px;box-shadow:inset 0 0 0 1px #a39e9e"></div>
<span class="t" style="left:585.8px;top:1059.6px;font-size:14px;line-height:14px;letter-spacing:0.22px;color:#000;">Operating Syste...</span>
<div style="left:712.5px;top:1055px;width:148.5px;height:25px;background:linear-gradient(#d8d4d2,#c6c2c2 45%,#cfcbcb);border:1px solid #f4f2f2;border-radius:5px;box-shadow:inset 0 0 0 1px #a8a3a3"></div>
<span class="t" style="left:736.8px;top:1059.6px;font-size:14px;line-height:14px;letter-spacing:0.39px;color:#000;">glxgears</span>
<svg width="16" height="20" style="left:263px;top:1058px"><use href="#folder" x="-4" y="0" width="18" height="20"/></svg>
<svg width="18" height="18" viewBox="0 0 16 16" style="left:414px;top:1058px"><rect x=".5" y="1.500" width="13" height="9" rx="1" fill="#1a1a1a" stroke="#777"/><path d="M1,2h12L1,9z" fill="#555" opacity=".6"/><rect x="5" y="11" width="4" height="2" fill="#ccc"/><rect x="3" y="13" width="8" height="1.200" fill="#ddd"/></svg>
<svg width="17" height="14" viewBox="0 0 16 13" style="left:565px;top:1061px"><path d="M1,3l2,-2.500l1,2.500h3l1,-2l1.500,2.500l5.500,.5l-1,2h-3.500v5h-8v-5z" fill="#7a7a80"/><rect x="2.500" y="6" width="6" height="5.500" fill="#8db522"/><rect x="3.500" y="7" width="3" height="2" fill="#c8c8c8"/><rect x="2.500" y="10" width="6" height="1.500" fill="#d6c81e"/></svg>
<div style="left:716px;top:1060px;width:17px;height:16px;background:linear-gradient(#e9d2c2 0,#e9d2c2 4px,#f8dcde 4px,#f2c9cc)"></div>
<div style="left:1705px;top:1056px;width:37px;height:23px;background:#000"></div>
<svg width="37" height="23" viewBox="0 0 37 23" style="left:1705px;top:1056px" shape-rendering="crispEdges"><path d="M0,23v-2h2v-3h1v3h2v-1h1v-2h1v3h1v-5h1v5h2v-2h1v2h3v1z" fill="#0a8a0a"/><path d="M18,23v-12h1v-2h1v1h2v-1h2v-1h1v1h2v-1h2v-1h1v-4h1v4h1v-2h1v2h1v2h1v14z" fill="#0a8a0a"/></svg>
<svg width="215" height="26" viewBox="1705 1054 215 26" style="left:1705px;top:1054px">
<rect x="1750.500" y="1057.500" width="13" height="9" fill="#2a2a2a" stroke="#999"/><rect x="1745.500" y="1062.500" width="14" height="10" fill="#1a1a1a" stroke="#aaa"/><rect x="1747" y="1074" width="11" height="1.500" fill="#bbb"/><path d="M1760,1078l3.500,-7l3.500,7z" fill="#4a7ad0"/><rect x="1763" y="1073" width="1" height="3" fill="#fff"/>
<rect x="1770.500" y="1058.500" width="14" height="17" rx="1" fill="#c49a5a" stroke="#8a6a30"/><rect x="1775" y="1056.500" width="5" height="3" fill="#999"/><path d="M1781.500,1066.500h9l3,3v9h-12z" fill="#f2f2f2" stroke="#aaa"/><path d="M1783.500,1071h7M1783.500,1073.500h7M1783.500,1076h7" stroke="#bbb" stroke-width="1"/>
<rect x="1872.500" y="1057.500" width="18" height="13" rx="1" fill="#9a86b8" stroke="#c8c0d8"/><rect x="1878" y="1071" width="7" height="3" fill="#bbb"/><ellipse cx="1881.500" cy="1075.500" rx="5.500" ry="1.500" fill="#ddd"/><rect x="1878.500" y="1063" width="6.500" height="5.500" fill="#e8c040"/><path d="M1879.800,1063v-1.500a2,2 0 0 1 4,0v1.500" fill="none" stroke="#ddd" stroke-width="1.200"/>
<rect x="1900" y="1058" width="16" height="17" rx="1" fill="#e22828"/><path d="M1905,1063.500a4.200,4.200 0 1 0 6,0" fill="none" stroke="#fff" stroke-width="1.700"/><path d="M1908,1061v5.500" stroke="#fff" stroke-width="1.700"/>
</svg>
<span class="t" style="left:1798.0px;top:1059.1px;font-size:14px;line-height:14px;letter-spacing:0.19px;color:#fff;">20:43</span>
<span class="t" style="left:1841.5px;top:1058.0px;font-size:16.5px;line-height:16.5px;letter-spacing:1.04px;color:#fff;font-weight:bold;">US</span>
</body></html>
